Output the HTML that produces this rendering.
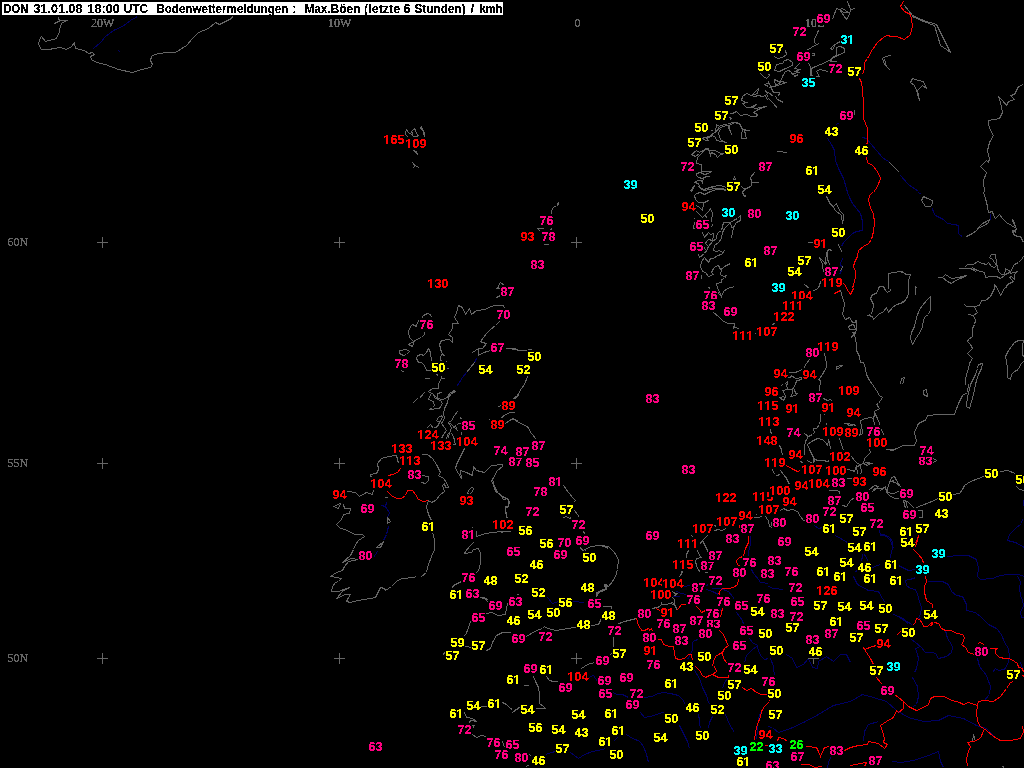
<!DOCTYPE html>
<html lang="de"><head><meta charset="utf-8"><title>Bodenwettermeldungen</title>
<style>html,body{margin:0;padding:0;background:#000;overflow:hidden}svg{display:block}.n{font:bold 12.6px "Liberation Sans",sans-serif}.l{font:12px "Liberation Serif",serif;fill:#666}.t{font:bold 12.6px "Liberation Sans",sans-serif;fill:#000}</style></head><body>
<svg width="1024" height="768" viewBox="0 0 1024 768">
<rect width="1024" height="768" fill="#000"/>
<defs><filter id="th" color-interpolation-filters="sRGB"><feComponentTransfer><feFuncA type="discrete" tableValues="0 0 1 1 1"/></feComponentTransfer></filter><filter id="tl" color-interpolation-filters="sRGB"><feComponentTransfer><feFuncA type="discrete" tableValues="0 1 1 1"/></feComponentTransfer></filter></defs>
<g fill="none" stroke="#666666" stroke-width="1" shape-rendering="crispEdges">
<polyline points="58.5,16.5 58.5,19.5 60.5,20.5 54.5,23.5 56.5,22.5 61.5,20.5 67.5,20.5 62.5,22.5 60.5,25.5 59.5,31.5 56.5,38.5 45.5,41.5 41.5,36.5 39.5,39.5 38.5,44.5 41.5,49.5 48.5,49.5 60.5,47.5 66.5,49.5 71.5,46.5 74.5,42.5 75.5,48.5 84.5,50.5 88.5,53.5 92.5,52.5 94.5,54.5 90.5,56.5 91.5,59.5 96.5,62.5 105.5,64.5 118.5,69.5 132.5,72.5 141.5,69.5 150.5,67.5 152.5,64.5 150.5,60.5 151.5,56.5 154.5,54.5 165.5,52.5 175.5,52.5 186.5,45.5 192.5,38.5 198.5,32.5 208.5,28.5 215.5,22.5 219.5,24.5 225.5,21.5 231.5,18.5 232.5,16.5"/>
<polyline points="406.5,129.5 405.5,132.5 405.5,134.5 407.5,136.5 408.5,137.5"/>
<polyline points="406.5,129.5 408.5,132.5 411.5,134.5 413.5,136.5 416.5,136.5 418.5,137.5"/>
<polyline points="411.5,131.5 414.5,128.5 415.5,130.5 416.5,133.5 418.5,135.5 416.5,136.5"/>
<polyline points="411.5,131.5 412.5,133.5 412.5,135.5"/>
<polyline points="421.5,126.5 420.5,128.5 422.5,129.5 423.5,132.5 424.5,136.5"/>
<polyline points="421.5,126.5 422.5,129.5 424.5,132.5 424.5,136.5"/>
<polyline points="413.5,150.5 416.5,151.5 417.5,154.5 415.5,152.5 413.5,150.5"/>
<polyline points="412.5,162.5 414.5,165.5 413.5,168.5"/>
<polyline points="412.5,162.5 415.5,165.5 418.5,167.5 417.5,168.5"/>
<polyline points="760.5,73.5 763.5,76.5 766.5,78.5 768.5,76.5"/>
<polyline points="764.5,84.5 767.5,83.5 768.5,83.5"/>
<polyline points="764.5,84.5 768.5,86.5"/>
<polyline points="765.5,90.5 766.5,92.5 768.5,93.5"/>
<polyline points="766.5,94.5 768.5,97.5"/>
<polyline points="751.5,95.5 754.5,92.5 758.5,88.5 757.5,93.5 754.5,94.5 751.5,95.5"/>
<polyline points="742.5,96.5 746.5,93.5 751.5,95.5 754.5,96.5 758.5,95.5 762.5,96.5 765.5,95.5 766.5,98.5 768.5,100.5"/>
<polyline points="742.5,96.5 741.5,100.5 746.5,102.5 742.5,103.5 746.5,107.5 750.5,107.5 754.5,105.5 756.5,104.5 752.5,107.5 755.5,108.5 760.5,107.5 766.5,106.5 760.5,108.5 756.5,110.5 753.5,112.5 757.5,114.5 756.5,116.5 751.5,116.5 746.5,114.5 740.5,115.5 736.5,111.5 732.5,113.5 729.5,113.5"/>
<polyline points="729.5,117.5 731.5,118.5 729.5,120.5"/>
<polyline points="716.5,124.5 719.5,126.5 715.5,132.5 716.5,124.5"/>
<polyline points="720.5,125.5 725.5,124.5 728.5,125.5"/>
<polyline points="710.5,130.5 712.5,130.5"/>
<polyline points="696.5,136.5 701.5,136.5"/>
<polyline points="704.5,137.5 709.5,136.5 714.5,132.5 719.5,128.5 722.5,126.5 728.5,125.5 729.5,128.5 731.5,134.5 728.5,127.5 730.5,124.5 735.5,122.5 739.5,123.5 741.5,126.5 742.5,129.5 749.5,130.5 744.5,130.5 745.5,134.5 746.5,138.5 741.5,138.5 741.5,134.5 742.5,129.5 740.5,125.5 738.5,123.5 733.5,122.5 728.5,123.5"/>
<polyline points="704.5,137.5 702.5,138.5 705.5,140.5 708.5,140.5 706.5,138.5 712.5,135.5 715.5,137.5 716.5,140.5 721.5,141.5 726.5,142.5 721.5,140.5 719.5,137.5 718.5,132.5 720.5,129.5"/>
<polyline points="691.5,154.5 696.5,150.5 699.5,152.5 704.5,149.5 708.5,148.5 709.5,151.5 710.5,155.5 711.5,152.5 715.5,154.5 717.5,157.5 720.5,154.5 724.5,153.5 720.5,153.5 715.5,150.5 709.5,150.5 705.5,148.5 701.5,153.5 697.5,157.5 696.5,163.5 701.5,164.5 701.5,171.5 705.5,171.5 711.5,171.5 708.5,173.5 704.5,174.5 700.5,172.5 696.5,173.5 696.5,175.5 698.5,177.5 702.5,178.5 706.5,176.5 709.5,176.5 703.5,177.5 702.5,182.5 701.5,180.5 697.5,180.5 694.5,182.5 698.5,183.5 699.5,186.5 701.5,189.5 704.5,190.5 706.5,188.5 712.5,186.5 720.5,185.5 726.5,187.5"/>
<polyline points="691.5,154.5 695.5,156.5 699.5,153.5"/>
<polyline points="694.5,185.5 692.5,189.5 691.5,192.5"/>
<polyline points="704.5,190.5 709.5,189.5 715.5,188.5 721.5,189.5 726.5,190.5"/>
<polyline points="734.5,176.5 733.5,179.5 735.5,179.5 734.5,176.5"/>
<polyline points="754.5,172.5 750.5,177.5 751.5,181.5 751.5,185.5 746.5,188.5 744.5,189.5 741.5,186.5 739.5,186.5"/>
<polyline points="751.5,182.5 758.5,182.5"/>
<polyline points="746.5,188.5 742.5,192.5"/>
<polyline points="904.5,5.5 912.5,15.5 923.5,20.5 936.5,24.5 950.5,52.5 946.5,49.5 940.5,45.5 934.5,25.5 923.5,21.5 912.5,16.5"/>
<polyline points="912.5,78.5 918.5,80.5 923.5,81.5 926.5,88.5 922.5,85.5 917.5,90.5 919.5,100.5 916.5,90.5 914.5,85.5 910.5,82.5 912.5,78.5"/>
<polyline points="1023.5,84.5 1018.5,86.5 1014.5,94.5 1010.5,95.5 1014.5,99.5 1008.5,101.5 1006.5,105.5 1002.5,100.5 998.5,96.5 1000.5,102.5 1002.5,112.5 999.5,118.5 988.5,120.5 988.5,124.5 990.5,130.5 993.5,135.5 989.5,142.5 987.5,150.5 989.5,158.5 988.5,162.5 986.5,160.5 980.5,166.5 986.5,172.5 983.5,180.5 984.5,192.5"/>
<polyline points="832.5,19.5 836.5,8.5 839.5,9.5 842.5,8.5 848.5,12.5 843.5,12.5 839.5,9.5 846.5,19.5 849.5,14.5 850.5,9.5 847.5,1.5"/>
<polyline points="850.5,9.5 855.5,8.5"/>
<polyline points="818.5,30.5 814.5,39.5 814.5,42.5 816.5,44.5 819.5,43.5"/>
<polyline points="816.5,44.5 806.5,50.5"/>
<polyline points="785.5,50.5 786.5,54.5 782.5,57.5 777.5,58.5 774.5,56.5"/>
<polyline points="811.5,53.5 814.5,53.5 814.5,55.5 811.5,55.5"/>
<polyline points="776.5,64.5 782.5,63.5 784.5,60.5 788.5,59.5 792.5,62.5 792.5,65.5 785.5,68.5 779.5,71.5 774.5,70.5 776.5,64.5"/>
<polyline points="799.5,63.5 794.5,68.5 799.5,69.5 795.5,71.5 799.5,72.5 793.5,73.5 794.5,76.5 798.5,74.5"/>
<polyline points="788.5,70.5 790.5,71.5 793.5,75.5"/>
<polyline points="788.5,70.5 785.5,71.5 782.5,76.5 780.5,81.5 786.5,82.5 777.5,85.5 773.5,86.5 770.5,86.5"/>
<polyline points="774.5,79.5 775.5,85.5 780.5,82.5 774.5,79.5"/>
<polyline points="768.5,74.5 770.5,75.5"/>
<polyline points="808.5,63.5 811.5,68.5 810.5,76.5 809.5,76.5"/>
<polyline points="811.5,68.5 815.5,66.5 820.5,64.5 827.5,61.5 833.5,57.5 839.5,54.5 844.5,52.5 844.5,49.5 843.5,47.5 839.5,46.5 836.5,47.5 836.5,55.5 832.5,57.5 830.5,61.5 836.5,61.5"/>
<polyline points="840.5,41.5 836.5,43.5 832.5,46.5 830.5,48.5 832.5,49.5 834.5,46.5"/>
<polyline points="810.5,68.5 811.5,74.5 812.5,76.5 819.5,76.5 816.5,71.5 819.5,69.5 828.5,71.5"/>
<polyline points="768.5,81.5 770.5,86.5 773.5,92.5 779.5,92.5 778.5,96.5"/>
<polyline points="770.5,86.5 768.5,88.5"/>
<polyline points="768.5,92.5 773.5,96.5"/>
<polyline points="891.5,55.5 885.5,56.5 882.5,58.5 884.5,64.5 889.5,69.5 886.5,66.5 884.5,59.5"/>
<polyline points="768.5,98.5 773.5,103.5 777.5,108.5"/>
<polyline points="775.5,96.5 777.5,99.5 783.5,102.5"/>
<polyline points="854.5,109.5 854.5,114.5"/>
<polyline points="777.5,151.5 787.5,152.5"/>
<polyline points="889.5,162.5 893.5,166.5 896.5,169.5 899.5,172.5"/>
<polyline points="504.5,285.5 500.5,282.5 498.5,285.5 498.5,287.5 496.5,288.5 499.5,288.5"/>
<polyline points="496.5,297.5 500.5,295.5"/>
<polyline points="458.5,305.5 462.5,307.5 465.5,314.5 469.5,308.5 471.5,314.5 476.5,310.5 485.5,309.5 490.5,306.5 496.5,305.5 503.5,305.5 504.5,308.5"/>
<polyline points="458.5,305.5 456.5,312.5 454.5,317.5 456.5,320.5 458.5,323.5 452.5,323.5 452.5,328.5 448.5,334.5 452.5,337.5 452.5,342.5 449.5,339.5 441.5,340.5 439.5,344.5 440.5,348.5 441.5,352.5 444.5,355.5 441.5,354.5 440.5,357.5 440.5,360.5 442.5,361.5"/>
<polyline points="446.5,361.5 447.5,362.5"/>
<polyline points="446.5,368.5 448.5,368.5"/>
<polyline points="499.5,321.5 495.5,325.5 490.5,329.5 486.5,333.5 483.5,337.5 480.5,341.5 482.5,342.5 486.5,343.5 482.5,348.5 478.5,348.5 478.5,355.5 483.5,352.5 487.5,351.5 490.5,350.5"/>
<polyline points="472.5,352.5 478.5,348.5"/>
<polyline points="505.5,348.5 514.5,348.5 518.5,350.5"/>
<polyline points="474.5,362.5 470.5,367.5 466.5,372.5"/>
<polyline points="431.5,317.5 430.5,314.5 427.5,313.5 423.5,315.5 421.5,318.5"/>
<polyline points="419.5,319.5 417.5,322.5 416.5,326.5 412.5,324.5 410.5,326.5 408.5,331.5 409.5,337.5 413.5,341.5 408.5,344.5 412.5,346.5 414.5,340.5 421.5,337.5 424.5,334.5 424.5,331.5"/>
<polyline points="399.5,350.5 406.5,349.5 409.5,351.5 406.5,354.5 403.5,355.5 399.5,353.5 399.5,350.5"/>
<polyline points="428.5,348.5 430.5,352.5 431.5,361.5 431.5,368.5"/>
<polyline points="428.5,348.5 426.5,352.5 423.5,355.5 421.5,354.5 417.5,355.5 416.5,358.5 418.5,362.5 421.5,362.5 424.5,365.5 426.5,370.5 431.5,370.5"/>
<polyline points="401.5,370.5 404.5,372.5"/>
<polyline points="512.5,349.5 523.5,350.5 532.5,349.5"/>
<polyline points="527.5,376.5 524.5,384.5"/>
<polyline points="558.5,202.5 556.5,205.5 553.5,207.5 551.5,210.5 551.5,214.5"/>
<polyline points="558.5,202.5 558.5,204.5 556.5,206.5"/>
<polyline points="538.5,218.5 538.5,218.5"/>
<polyline points="537.5,228.5 543.5,228.5"/>
<polyline points="537.5,228.5 540.5,231.5"/>
<polyline points="551.5,228.5 550.5,230.5"/>
<polyline points="544.5,243.5 544.5,244.5 548.5,244.5 548.5,243.5"/>
<polyline points="690.5,191.5 693.5,186.5"/>
<polyline points="698.5,186.5 703.5,189.5 710.5,187.5 715.5,186.5"/>
<polyline points="727.5,190.5 722.5,188.5 716.5,189.5 710.5,191.5 704.5,194.5 700.5,192.5 696.5,193.5 694.5,195.5 695.5,199.5 698.5,202.5 703.5,202.5 708.5,200.5 703.5,203.5 702.5,210.5 699.5,207.5 696.5,205.5"/>
<polyline points="696.5,211.5 699.5,214.5 702.5,217.5 705.5,214.5 708.5,211.5 710.5,208.5 712.5,213.5 711.5,221.5 710.5,222.5"/>
<polyline points="705.5,214.5 706.5,218.5"/>
<polyline points="694.5,217.5 694.5,218.5"/>
<polyline points="712.5,224.5 711.5,227.5"/>
<polyline points="694.5,222.5 693.5,228.5 695.5,228.5"/>
<polyline points="702.5,232.5 704.5,237.5 708.5,232.5 710.5,234.5 713.5,233.5 713.5,236.5 712.5,240.5 708.5,239.5 706.5,241.5 705.5,243.5 708.5,246.5 707.5,248.5 706.5,251.5 704.5,252.5"/>
<polyline points="704.5,247.5 705.5,250.5"/>
<polyline points="740.5,215.5 737.5,218.5 733.5,220.5 730.5,222.5 723.5,222.5 721.5,230.5 718.5,232.5 716.5,235.5 716.5,238.5 712.5,241.5 708.5,246.5"/>
<polyline points="730.5,222.5 724.5,228.5 722.5,232.5 721.5,238.5 718.5,242.5 714.5,245.5 713.5,250.5 716.5,251.5 719.5,250.5 722.5,252.5 724.5,250.5 721.5,254.5 717.5,255.5 713.5,258.5 710.5,258.5 708.5,262.5 704.5,257.5 701.5,261.5 700.5,266.5 702.5,271.5 705.5,272.5 708.5,276.5 713.5,274.5 711.5,272.5 713.5,268.5 715.5,266.5 718.5,265.5 720.5,269.5 726.5,265.5 730.5,263.5 724.5,266.5 721.5,269.5 720.5,274.5 723.5,276.5 726.5,275.5 724.5,278.5 721.5,279.5 721.5,282.5"/>
<polyline points="740.5,215.5 740.5,220.5 736.5,222.5 733.5,227.5 732.5,232.5 731.5,238.5"/>
<polyline points="730.5,222.5 731.5,227.5 733.5,227.5"/>
<polyline points="698.5,254.5 699.5,257.5 703.5,254.5 701.5,254.5"/>
<polyline points="701.5,274.5 701.5,278.5"/>
<polyline points="742.5,188.5 746.5,188.5 751.5,186.5"/>
<polyline points="743.5,190.5 742.5,192.5 744.5,196.5 746.5,195.5"/>
<polyline points="722.5,282.5 716.5,283.5 717.5,288.5 719.5,291.5 721.5,296.5 723.5,291.5 727.5,288.5 734.5,286.5"/>
<polyline points="719.5,291.5 718.5,293.5 721.5,296.5"/>
<polyline points="708.5,287.5 710.5,288.5"/>
<polyline points="713.5,312.5 718.5,316.5 723.5,321.5 728.5,323.5 734.5,323.5 733.5,328.5 734.5,326.5 737.5,328.5 740.5,329.5"/>
<polyline points="754.5,333.5 756.5,333.5"/>
<polyline points="772.5,324.5 775.5,323.5"/>
<polyline points="788.5,372.5 794.5,372.5 800.5,370.5"/>
<polyline points="788.5,378.5 791.5,375.5 795.5,378.5"/>
<polyline points="774.5,323.5 772.5,324.5"/>
<polyline points="923.5,196.5 927.5,198.5 932.5,200.5 932.5,203.5 930.5,206.5 925.5,206.5 923.5,203.5 921.5,200.5 923.5,196.5"/>
<polyline points="983.5,192.5 985.5,198.5 987.5,206.5 988.5,212.5 992.5,211.5 993.5,215.5 995.5,218.5 999.5,214.5 1002.5,218.5 1006.5,222.5 1011.5,225.5 1016.5,228.5 1015.5,230.5 1012.5,230.5 1013.5,234.5 1017.5,236.5 1020.5,236.5 1022.5,240.5 1023.5,242.5"/>
<polyline points="1012.5,218.5 1012.5,221.5 1014.5,224.5 1015.5,226.5 1014.5,223.5 1013.5,220.5"/>
<polyline points="1012.5,230.5 1016.5,232.5"/>
<polyline points="989.5,219.5 986.5,221.5 982.5,223.5 979.5,226.5 976.5,230.5 972.5,233.5 968.5,235.5 966.5,236.5"/>
<polyline points="989.5,219.5 988.5,222.5 984.5,225.5 979.5,227.5"/>
<polyline points="1023.5,256.5 1021.5,259.5 1018.5,262.5 1014.5,264.5 1012.5,267.5 1011.5,271.5 1007.5,273.5 1005.5,274.5 1001.5,274.5 998.5,271.5 996.5,263.5 995.5,254.5 991.5,254.5 989.5,257.5 992.5,259.5 996.5,265.5"/>
<polyline points="958.5,268.5 964.5,268.5"/>
<polyline points="958.5,268.5 964.5,268.5"/>
<polyline points="964.5,267.5 967.5,264.5 973.5,264.5 977.5,261.5 982.5,263.5 986.5,264.5 988.5,262.5 991.5,266.5 994.5,267.5 996.5,265.5"/>
<polyline points="964.5,268.5 970.5,268.5 974.5,270.5 973.5,268.5 977.5,270.5 984.5,272.5 985.5,277.5 991.5,276.5 996.5,276.5 1000.5,278.5 1004.5,275.5 1005.5,268.5 1008.5,270.5 1010.5,271.5 1010.5,273.5 1017.5,271.5 1014.5,274.5 1014.5,279.5 1011.5,276.5 1009.5,277.5 1013.5,281.5 1007.5,284.5 1005.5,288.5"/>
<polyline points="937.5,277.5 942.5,277.5 945.5,274.5 951.5,278.5 958.5,277.5 966.5,275.5 960.5,278.5 955.5,280.5 951.5,283.5 947.5,281.5 942.5,277.5"/>
<polyline points="896.5,271.5 902.5,271.5 905.5,274.5 910.5,274.5 908.5,280.5 908.5,284.5 908.5,288.5"/>
<polyline points="915.5,288.5 915.5,286.5 917.5,288.5"/>
<polyline points="994.5,288.5 994.5,284.5 997.5,288.5"/>
<polyline points="896.5,304.5 900.5,303.5 904.5,300.5 907.5,297.5 908.5,292.5 908.5,288.5"/>
<polyline points="915.5,288.5 915.5,294.5"/>
<polyline points="930.5,296.5 930.5,302.5 930.5,309.5 928.5,314.5 925.5,316.5 923.5,319.5 922.5,326.5 920.5,331.5 916.5,337.5 912.5,344.5 910.5,338.5 911.5,332.5 914.5,326.5 916.5,317.5 919.5,309.5 922.5,305.5 926.5,300.5 930.5,296.5"/>
<polyline points="994.5,288.5 992.5,292.5 990.5,296.5 985.5,300.5 981.5,300.5 979.5,305.5 974.5,306.5 966.5,306.5 964.5,304.5"/>
<polyline points="974.5,306.5 975.5,309.5 977.5,312.5 973.5,315.5 968.5,314.5"/>
<polyline points="973.5,315.5 975.5,320.5 974.5,324.5 972.5,328.5 972.5,336.5 968.5,339.5 967.5,341.5 970.5,344.5 972.5,348.5 967.5,353.5 972.5,358.5 969.5,363.5 968.5,368.5 966.5,374.5 965.5,379.5 965.5,384.5"/>
<polyline points="997.5,288.5 1000.5,295.5 1004.5,288.5"/>
<polyline points="982.5,363.5 978.5,364.5 977.5,368.5 975.5,374.5 972.5,380.5 970.5,384.5"/>
<polyline points="982.5,363.5 981.5,368.5 978.5,374.5 976.5,380.5 975.5,384.5"/>
<polyline points="1023.5,340.5 1018.5,340.5 1014.5,342.5 1011.5,346.5 1008.5,350.5 1005.5,356.5 1006.5,360.5 1007.5,368.5 1007.5,377.5 1010.5,379.5 1011.5,374.5 1014.5,371.5 1018.5,369.5 1020.5,364.5 1024.5,360.5"/>
<polyline points="1023.5,340.5 1022.5,346.5 1022.5,353.5 1023.5,357.5"/>
<polyline points="900.5,384.5 901.5,378.5 904.5,377.5 902.5,384.5"/>
<polyline points="826.5,196.5 830.5,204.5 833.5,206.5 836.5,203.5 839.5,210.5 843.5,214.5 843.5,218.5 842.5,223.5 841.5,215.5 835.5,210.5 831.5,204.5"/>
<polyline points="808.5,242.5 812.5,242.5"/>
<polyline points="838.5,244.5 840.5,249.5 842.5,252.5"/>
<polyline points="832.5,250.5 828.5,249.5 827.5,252.5 827.5,258.5 828.5,262.5 830.5,265.5"/>
<polyline points="828.5,249.5 826.5,253.5 825.5,260.5 826.5,264.5"/>
<polyline points="819.5,257.5 823.5,261.5 826.5,265.5"/>
<polyline points="819.5,257.5 822.5,264.5 823.5,272.5"/>
<polyline points="842.5,266.5 840.5,271.5"/>
<polyline points="804.5,284.5 809.5,288.5"/>
<polyline points="821.5,280.5 819.5,284.5 818.5,288.5"/>
<polyline points="888.5,288.5 888.5,273.5 894.5,272.5 899.5,271.5 903.5,272.5 906.5,274.5 910.5,274.5 908.5,280.5 908.5,288.5"/>
<polyline points="878.5,288.5 879.5,286.5 883.5,286.5 884.5,288.5"/>
<polyline points="840.5,290.5 842.5,297.5 844.5,303.5 843.5,310.5 842.5,313.5 843.5,316.5 845.5,319.5 849.5,317.5 851.5,320.5 852.5,322.5 855.5,322.5 855.5,320.5 856.5,320.5 856.5,329.5 855.5,332.5 854.5,334.5 852.5,332.5 854.5,332.5 851.5,337.5 854.5,334.5 855.5,339.5 856.5,344.5 856.5,350.5 859.5,356.5 860.5,362.5 863.5,362.5 865.5,368.5 866.5,374.5 869.5,380.5 872.5,384.5"/>
<polyline points="848.5,326.5 852.5,324.5 854.5,325.5 855.5,329.5 849.5,329.5 848.5,326.5"/>
<polyline points="813.5,290.5 818.5,288.5"/>
<polyline points="809.5,359.5 806.5,363.5 803.5,368.5 800.5,370.5 795.5,372.5 788.5,372.5"/>
<polyline points="824.5,353.5 825.5,358.5 826.5,363.5 826.5,367.5 824.5,370.5 822.5,374.5 819.5,378.5 818.5,379.5 820.5,380.5 820.5,384.5"/>
<polyline points="836.5,366.5 842.5,365.5 836.5,369.5 836.5,366.5"/>
<polyline points="784.5,384.5 787.5,381.5 787.5,384.5"/>
<polyline points="788.5,377.5 792.5,376.5 795.5,378.5 802.5,377.5"/>
<polyline points="795.5,384.5 796.5,380.5 798.5,380.5 802.5,378.5"/>
<polyline points="878.5,288.5 876.5,293.5 872.5,294.5 870.5,298.5 873.5,304.5 872.5,311.5 870.5,314.5 868.5,315.5 872.5,316.5 873.5,319.5 878.5,314.5 883.5,311.5 886.5,307.5 888.5,312.5 892.5,307.5 896.5,304.5 903.5,302.5 906.5,298.5 908.5,293.5 908.5,288.5"/>
<polyline points="884.5,288.5 885.5,290.5 887.5,292.5 890.5,290.5 890.5,288.5"/>
<polyline points="370.5,474.5 376.5,473.5 378.5,469.5 377.5,463.5 381.5,458.5 388.5,456.5 396.5,455.5 397.5,459.5 398.5,463.5"/>
<polyline points="421.5,454.5 427.5,454.5 432.5,458.5 436.5,464.5 440.5,472.5 438.5,475.5 443.5,478.5 446.5,482.5 448.5,487.5 445.5,487.5 444.5,483.5 442.5,485.5 444.5,491.5 440.5,494.5 435.5,500.5 431.5,502.5 428.5,500.5"/>
<polyline points="421.5,475.5 428.5,476.5 428.5,480.5 425.5,483.5 421.5,482.5"/>
<polyline points="347.5,491.5 355.5,492.5 359.5,496.5 366.5,492.5 372.5,494.5 373.5,490.5"/>
<polyline points="370.5,474.5 371.5,478.5"/>
<polyline points="343.5,504.5 344.5,508.5 350.5,508.5 349.5,513.5 343.5,514.5 341.5,519.5 336.5,524.5 340.5,528.5 345.5,529.5 350.5,532.5 355.5,534.5 362.5,534.5 364.5,536.5 358.5,540.5 355.5,544.5 353.5,549.5 350.5,555.5 342.5,562.5 351.5,558.5 358.5,559.5 348.5,561.5 344.5,566.5 342.5,570.5 336.5,572.5 330.5,576.5"/>
<polyline points="428.5,500.5 426.5,506.5 428.5,514.5 431.5,520.5 432.5,524.5"/>
<polyline points="432.5,532.5 434.5,539.5 434.5,549.5 431.5,556.5 428.5,564.5 426.5,572.5 421.5,576.5"/>
<polyline points="464.5,448.5 460.5,456.5 456.5,464.5 455.5,468.5 458.5,473.5 461.5,478.5 460.5,470.5 466.5,472.5 472.5,475.5 473.5,466.5 476.5,470.5 484.5,472.5 491.5,465.5 502.5,464.5 502.5,466.5 497.5,470.5 492.5,479.5 494.5,486.5 497.5,492.5 502.5,496.5 508.5,499.5 508.5,506.5 505.5,506.5 506.5,516.5 507.5,520.5"/>
<polyline points="387.5,517.5 390.5,521.5 387.5,523.5 387.5,517.5"/>
<polyline points="383.5,541.5 380.5,547.5 376.5,547.5 383.5,541.5"/>
<polyline points="384.5,497.5 387.5,497.5"/>
<polyline points="333.5,506.5 340.5,503.5 338.5,508.5 333.5,506.5"/>
<polyline points="436.5,374.5 438.5,375.5"/>
<polyline points="441.5,375.5 441.5,378.5 444.5,378.5"/>
<polyline points="424.5,378.5 429.5,378.5"/>
<polyline points="441.5,378.5 438.5,383.5 438.5,388.5 432.5,388.5 428.5,391.5 431.5,393.5 429.5,396.5 428.5,399.5 433.5,401.5 434.5,405.5 432.5,407.5 429.5,409.5 439.5,408.5 442.5,403.5 440.5,400.5 435.5,398.5 432.5,393.5 437.5,398.5 442.5,399.5 447.5,397.5 449.5,393.5 454.5,390.5 455.5,391.5 451.5,393.5 448.5,397.5 447.5,402.5 444.5,408.5 443.5,413.5 444.5,418.5 441.5,423.5 444.5,427.5 446.5,430.5 443.5,434.5 441.5,438.5"/>
<polyline points="437.5,393.5 441.5,392.5 437.5,393.5 437.5,397.5"/>
<polyline points="424.5,392.5 419.5,398.5"/>
<polyline points="417.5,398.5 412.5,403.5"/>
<polyline points="441.5,415.5 438.5,417.5 436.5,420.5 439.5,422.5 437.5,426.5 433.5,428.5 430.5,424.5 426.5,428.5"/>
<polyline points="441.5,415.5 442.5,417.5 439.5,422.5"/>
<polyline points="457.5,411.5 454.5,415.5 451.5,420.5 448.5,422.5 449.5,424.5 451.5,427.5 450.5,431.5 447.5,434.5 446.5,439.5"/>
<polyline points="448.5,422.5 451.5,424.5 455.5,428.5 458.5,431.5"/>
<polyline points="449.5,432.5 448.5,438.5"/>
<polyline points="451.5,433.5 453.5,436.5 454.5,440.5 455.5,444.5 452.5,444.5"/>
<polyline points="460.5,417.5 461.5,419.5 461.5,434.5"/>
<polyline points="460.5,423.5 458.5,423.5 456.5,425.5 453.5,427.5 456.5,428.5 455.5,425.5"/>
<polyline points="513.5,399.5 517.5,396.5 518.5,394.5"/>
<polyline points="498.5,406.5 501.5,405.5"/>
<polyline points="500.5,418.5 505.5,414.5 510.5,412.5 514.5,412.5"/>
<polyline points="505.5,423.5 509.5,420.5 513.5,418.5 516.5,420.5 518.5,421.5"/>
<polyline points="489.5,419.5 490.5,420.5"/>
<polyline points="524.5,384.5 521.5,388.5 517.5,395.5 512.5,399.5"/>
<polyline points="512.5,412.5 514.5,412.5"/>
<polyline points="512.5,418.5 520.5,423.5 527.5,426.5 531.5,433.5 536.5,439.5"/>
<polyline points="579.5,546.5 583.5,550.5 590.5,546.5 600.5,545.5 608.5,546.5 614.5,552.5 618.5,559.5 617.5,569.5 615.5,576.5"/>
<polyline points="691.5,535.5 693.5,537.5"/>
<polyline points="707.5,535.5 702.5,540.5 699.5,544.5"/>
<polyline points="702.5,540.5 705.5,546.5 708.5,552.5"/>
<polyline points="688.5,550.5 686.5,554.5 686.5,558.5"/>
<polyline points="697.5,550.5 699.5,555.5 701.5,557.5 696.5,558.5 695.5,561.5 696.5,565.5 697.5,568.5 699.5,570.5"/>
<polyline points="714.5,525.5 716.5,526.5"/>
<polyline points="714.5,530.5 718.5,529.5 721.5,530.5 726.5,528.5"/>
<polyline points="753.5,517.5 757.5,517.5 762.5,516.5"/>
<polyline points="756.5,513.5 756.5,514.5"/>
<polyline points="765.5,516.5 767.5,519.5 768.5,520.5"/>
<polyline points="681.5,571.5 680.5,572.5"/>
<polyline points="491.5,480.5 493.5,485.5 495.5,491.5 500.5,494.5 503.5,499.5 507.5,498.5 509.5,501.5 508.5,506.5 505.5,508.5 505.5,512.5 507.5,518.5"/>
<polyline points="510.5,531.5 505.5,531.5 501.5,531.5 502.5,533.5"/>
<polyline points="501.5,531.5 492.5,532.5 485.5,533.5 479.5,535.5 476.5,536.5 476.5,530.5"/>
<polyline points="471.5,527.5 472.5,527.5"/>
<polyline points="474.5,488.5 471.5,487.5 468.5,490.5 467.5,493.5 469.5,494.5 471.5,492.5 473.5,489.5"/>
<polyline points="473.5,542.5 469.5,546.5 465.5,551.5 464.5,553.5 471.5,552.5 473.5,549.5 478.5,548.5 480.5,553.5 480.5,561.5 479.5,568.5 477.5,571.5 475.5,573.5"/>
<polyline points="451.5,588.5 454.5,584.5 460.5,582.5"/>
<polyline points="482.5,597.5 486.5,598.5 487.5,600.5"/>
<polyline points="563.5,485.5 568.5,492.5 573.5,498.5 575.5,500.5 573.5,502.5"/>
<polyline points="574.5,510.5 577.5,514.5 579.5,517.5"/>
<polyline points="563.5,517.5 566.5,516.5 569.5,518.5 571.5,517.5"/>
<polyline points="582.5,527.5 583.5,530.5 584.5,534.5"/>
<polyline points="579.5,546.5 581.5,549.5 584.5,551.5 586.5,548.5 591.5,546.5 598.5,545.5 604.5,546.5 608.5,548.5"/>
<polyline points="608.5,585.5 604.5,584.5 606.5,588.5 603.5,589.5 596.5,592.5 596.5,597.5"/>
<polyline points="516.5,595.5 519.5,593.5"/>
<polyline points="884.5,448.5 892.5,450.5 903.5,445.5 914.5,445.5 916.5,440.5 914.5,432.5 918.5,423.5 926.5,419.5 927.5,415.5 938.5,414.5 943.5,414.5 954.5,414.5 958.5,403.5 962.5,395.5 967.5,392.5 968.5,384.5"/>
<polyline points="975.5,384.5 973.5,394.5 969.5,408.5 966.5,406.5 967.5,396.5 969.5,389.5 970.5,384.5"/>
<polyline points="923.5,390.5 926.5,389.5 927.5,396.5 923.5,394.5 923.5,390.5"/>
<polyline points="785.5,476.5 787.5,480.5 789.5,484.5"/>
<polyline points="846.5,478.5 851.5,478.5"/>
<polyline points="828.5,490.5 836.5,490.5 839.5,491.5 839.5,494.5"/>
<polyline points="854.5,497.5 850.5,500.5 846.5,506.5 842.5,505.5"/>
<polyline points="780.5,510.5 783.5,508.5 787.5,510.5 792.5,509.5 797.5,511.5 800.5,516.5 803.5,520.5 805.5,520.5"/>
<polyline points="768.5,520.5 769.5,526.5 772.5,527.5"/>
<polyline points="771.5,521.5 771.5,525.5"/>
<polyline points="869.5,489.5 874.5,485.5 878.5,486.5 876.5,488.5 872.5,491.5 874.5,488.5 880.5,488.5 885.5,487.5 887.5,492.5"/>
<polyline points="933.5,458.5 936.5,460.5 933.5,462.5"/>
<polyline points="891.5,477.5 894.5,476.5 896.5,480.5 900.5,486.5 895.5,482.5 891.5,481.5 894.5,479.5"/>
<polyline points="891.5,477.5 888.5,485.5 886.5,492.5 890.5,496.5 895.5,498.5 900.5,498.5"/>
<polyline points="880.5,490.5 885.5,486.5 886.5,492.5 893.5,493.5 900.5,490.5"/>
<polyline points="903.5,500.5 907.5,501.5 910.5,504.5 914.5,508.5 921.5,505.5 929.5,502.5 938.5,498.5"/>
<polyline points="903.5,500.5 905.5,508.5"/>
<polyline points="906.5,502.5 907.5,508.5"/>
<polyline points="917.5,510.5 922.5,510.5 922.5,517.5 918.5,517.5"/>
<polyline points="953.5,494.5 959.5,493.5 962.5,489.5 964.5,485.5 970.5,481.5 978.5,478.5 985.5,475.5"/>
<polyline points="1000.5,471.5 1007.5,470.5 1015.5,473.5"/>
<polyline points="1016.5,486.5 1019.5,489.5 1024.5,490.5"/>
<polyline points="780.5,386.5 782.5,384.5"/>
<polyline points="786.5,384.5 787.5,389.5 792.5,389.5 795.5,384.5"/>
<polyline points="787.5,389.5 782.5,390.5 784.5,393.5 785.5,396.5 783.5,400.5 779.5,397.5 784.5,396.5"/>
<polyline points="792.5,389.5 792.5,393.5 790.5,396.5 795.5,395.5 797.5,393.5 795.5,393.5 794.5,389.5"/>
<polyline points="819.5,384.5 819.5,391.5"/>
<polyline points="823.5,398.5 827.5,400.5 830.5,399.5 832.5,401.5"/>
<polyline points="820.5,413.5 823.5,413.5 825.5,415.5"/>
<polyline points="820.5,413.5 820.5,420.5 819.5,424.5 816.5,428.5 813.5,428.5 814.5,432.5 812.5,434.5 808.5,436.5 804.5,433.5 806.5,435.5 808.5,436.5 805.5,441.5 804.5,446.5 804.5,454.5"/>
<polyline points="826.5,422.5 826.5,425.5"/>
<polyline points="844.5,423.5 854.5,424.5 855.5,426.5 849.5,425.5 847.5,424.5"/>
<polyline points="807.5,444.5 811.5,441.5 817.5,438.5 822.5,439.5 825.5,442.5 827.5,445.5 828.5,440.5 829.5,442.5 830.5,449.5"/>
<polyline points="807.5,444.5 809.5,449.5 812.5,455.5 814.5,459.5 818.5,460.5 823.5,460.5 827.5,461.5 829.5,460.5"/>
<polyline points="814.5,459.5 813.5,463.5"/>
<polyline points="807.5,460.5 812.5,463.5"/>
<polyline points="839.5,438.5 841.5,444.5 843.5,450.5"/>
<polyline points="860.5,420.5 865.5,418.5 870.5,417.5 873.5,418.5 874.5,425.5"/>
<polyline points="860.5,420.5 861.5,426.5 860.5,432.5 859.5,435.5 862.5,433.5 862.5,430.5 861.5,427.5"/>
<polyline points="873.5,418.5 874.5,414.5 874.5,412.5"/>
<polyline points="874.5,412.5 877.5,418.5 879.5,423.5 881.5,430.5 884.5,435.5"/>
<polyline points="872.5,384.5 876.5,390.5 879.5,395.5 882.5,397.5 878.5,403.5 876.5,404.5 879.5,408.5 874.5,411.5 874.5,413.5"/>
<polyline points="866.5,442.5 867.5,442.5"/>
<polyline points="869.5,448.5 870.5,452.5 867.5,455.5 864.5,458.5 863.5,463.5 867.5,465.5 870.5,463.5 868.5,462.5 866.5,464.5"/>
<polyline points="851.5,456.5 854.5,460.5 857.5,463.5 860.5,464.5"/>
<polyline points="856.5,466.5 860.5,465.5 861.5,472.5 859.5,474.5"/>
<polyline points="847.5,469.5 852.5,470.5 854.5,471.5 856.5,465.5 857.5,474.5"/>
<polyline points="860.5,464.5 866.5,462.5 868.5,463.5 872.5,463.5"/>
<polyline points="799.5,460.5 802.5,462.5 800.5,462.5"/>
<polyline points="772.5,469.5 774.5,474.5"/>
<polyline points="776.5,475.5 780.5,474.5"/>
<polyline points="780.5,470.5 783.5,474.5 787.5,480.5"/>
<polyline points="770.5,428.5 770.5,432.5 772.5,433.5"/>
<polyline points="779.5,445.5 781.5,449.5 782.5,455.5"/>
<polyline points="884.5,448.5 889.5,449.5 893.5,449.5 896.5,448.5"/>
<polyline points="330.5,576.5 336.5,577.5 341.5,578.5 338.5,581.5 335.5,582.5 332.5,586.5 331.5,591.5 338.5,591.5 349.5,587.5 342.5,591.5 336.5,598.5 345.5,594.5 350.5,594.5 348.5,597.5 346.5,601.5 350.5,602.5 357.5,600.5 364.5,599.5 370.5,598.5 375.5,597.5 378.5,591.5 380.5,587.5 384.5,588.5 385.5,590.5 391.5,586.5 396.5,581.5 401.5,578.5 414.5,577.5 415.5,576.5"/>
<polyline points="451.5,588.5 454.5,585.5 458.5,582.5 462.5,581.5"/>
<polyline points="478.5,597.5 484.5,598.5 488.5,602.5"/>
<polyline points="486.5,613.5 491.5,612.5 498.5,615.5 505.5,614.5 506.5,607.5 508.5,601.5"/>
<polyline points="470.5,621.5 468.5,627.5 465.5,635.5 461.5,637.5"/>
<polyline points="465.5,646.5 471.5,647.5"/>
<polyline points="486.5,650.5 490.5,648.5 492.5,642.5 496.5,635.5 502.5,632.5 512.5,632.5"/>
<polyline points="442.5,655.5 444.5,652.5 446.5,656.5"/>
<polyline points="480.5,706.5 487.5,706.5"/>
<polyline points="502.5,702.5 506.5,704.5 510.5,708.5 512.5,709.5"/>
<polyline points="464.5,712.5 466.5,717.5 472.5,718.5 476.5,721.5 470.5,720.5 468.5,724.5 474.5,725.5 472.5,728.5"/>
<polyline points="472.5,734.5 476.5,737.5 481.5,735.5 486.5,736.5"/>
<polyline points="502.5,741.5 504.5,747.5"/>
<polyline points="512.5,596.5 518.5,594.5"/>
<polyline points="512.5,712.5 517.5,708.5 521.5,706.5"/>
<polyline points="526.5,636.5 534.5,631.5 542.5,628.5 544.5,626.5 547.5,628.5 556.5,630.5 574.5,627.5 577.5,627.5"/>
<polyline points="591.5,625.5 598.5,624.5 601.5,618.5 602.5,614.5 611.5,608.5 611.5,606.5 602.5,606.5"/>
<polyline points="596.5,596.5 598.5,592.5 606.5,589.5 604.5,585.5 608.5,586.5 612.5,581.5 615.5,576.5"/>
<polyline points="616.5,624.5 624.5,621.5 636.5,618.5 647.5,610.5 656.5,607.5 660.5,606.5"/>
<polyline points="613.5,636.5 613.5,647.5"/>
<polyline points="610.5,654.5 613.5,652.5"/>
<polyline points="581.5,668.5 587.5,664.5 594.5,662.5"/>
<polyline points="533.5,676.5 535.5,681.5 538.5,687.5 539.5,694.5 539.5,703.5 543.5,706.5 545.5,708.5 540.5,708.5 535.5,708.5"/>
<polyline points="523.5,685.5 528.5,685.5"/>
<polyline points="546.5,676.5 549.5,680.5 553.5,681.5 558.5,681.5"/>
<polyline points="512.5,711.5 514.5,711.5 520.5,706.5"/>
<polyline points="529.5,754.5 531.5,756.5"/>
<polyline points="526.5,766.5 529.5,764.5"/>
<polyline points="682.5,571.5 680.5,575.5 678.5,577.5"/>
<polyline points="698.5,570.5 700.5,571.5"/>
<polyline points="704.5,572.5 707.5,572.5"/>
<polyline points="672.5,591.5 676.5,594.5 673.5,596.5 678.5,592.5"/>
<polyline points="672.5,597.5 674.5,599.5 674.5,603.5 671.5,602.5"/>
<polyline points="661.5,601.5 661.5,604.5 666.5,604.5 669.5,603.5 674.5,604.5 676.5,608.5 676.5,609.5"/>
<polyline points="652.5,608.5 656.5,607.5 661.5,605.5"/>
<polyline points="972.5,741.5 973.5,734.5 975.5,741.5"/>
<polyline points="1002.5,766.5 1004.5,767.5"/>
</g>
<g fill="none" stroke="#000064" stroke-width="1" shape-rendering="crispEdges">
<polyline points="137.5,16.5 130.5,20.5 122.5,26.5 113.5,30.5 105.5,36.5 100.5,42.5 93.5,48.5"/>
<polyline points="118.5,50.5 120.5,52.5"/>
<polyline points="900.5,175.5 908.5,184.5 918.5,191.5"/>
<polyline points="839.5,122.5 836.5,124.5"/>
<polyline points="827.5,138.5 831.5,144.5 834.5,150.5 835.5,160.5 838.5,168.5 843.5,178.5 846.5,188.5 847.5,192.5"/>
<polyline points="862.5,137.5 866.5,138.5 870.5,143.5 876.5,150.5 882.5,157.5 886.5,160.5 889.5,161.5"/>
<polyline points="476.5,358.5 474.5,362.5"/>
<polyline points="918.5,192.5 921.5,194.5"/>
<polyline points="932.5,208.5 933.5,212.5 935.5,215.5 939.5,217.5 943.5,219.5 947.5,223.5 954.5,224.5 958.5,225.5 958.5,233.5 960.5,235.5 962.5,236.5"/>
<polyline points="990.5,213.5 990.5,219.5"/>
<polyline points="847.5,192.5 849.5,197.5 852.5,203.5 856.5,208.5 860.5,213.5 862.5,221.5 862.5,230.5 856.5,231.5 852.5,233.5 848.5,237.5 843.5,242.5 841.5,246.5"/>
<polyline points="842.5,258.5 840.5,263.5 841.5,267.5"/>
<polyline points="841.5,270.5 839.5,274.5"/>
<polyline points="381.5,505.5 385.5,506.5 386.5,502.5 385.5,506.5 386.5,508.5 389.5,512.5 387.5,517.5"/>
<polyline points="388.5,526.5 386.5,534.5 383.5,540.5"/>
<polyline points="377.5,551.5 373.5,557.5"/>
<polyline points="466.5,372.5 462.5,377.5 459.5,382.5 456.5,386.5"/>
<polyline points="750.5,535.5 750.5,544.5 748.5,551.5 748.5,556.5"/>
<polyline points="751.5,569.5 753.5,572.5"/>
<polyline points="947.5,556.5 958.5,555.5 968.5,555.5 976.5,559.5 978.5,568.5 977.5,576.5"/>
<polyline points="898.5,565.5 908.5,570.5 916.5,569.5"/>
<polyline points="996.5,576.5 1006.5,574.5 1018.5,574.5 1024.5,576.5"/>
<polyline points="814.5,525.5 818.5,528.5 822.5,527.5"/>
<polyline points="835.5,535.5 840.5,538.5 847.5,542.5"/>
<polyline points="879.5,530.5 880.5,535.5 884.5,534.5 889.5,537.5 892.5,541.5 892.5,548.5 890.5,555.5 890.5,558.5"/>
<polyline points="861.5,550.5 862.5,556.5 860.5,564.5 856.5,570.5 855.5,572.5"/>
<polyline points="864.5,554.5 868.5,561.5"/>
<polyline points="872.5,567.5 877.5,565.5 880.5,564.5"/>
<polyline points="880.5,534.5 886.5,536.5 890.5,540.5 893.5,548.5"/>
<polyline points="1023.5,499.5 1023.5,505.5"/>
<polyline points="1022.5,519.5 1021.5,523.5 1015.5,528.5 1009.5,534.5 1007.5,540.5 1015.5,542.5 1024.5,547.5"/>
<polyline points="547.5,597.5 552.5,603.5 558.5,601.5"/>
<polyline points="573.5,601.5 584.5,602.5"/>
<polyline points="588.5,677.5 593.5,675.5 597.5,681.5"/>
<polyline points="613.5,692.5 616.5,694.5 622.5,694.5 628.5,697.5"/>
<polyline points="545.5,754.5 551.5,752.5 555.5,751.5"/>
<polyline points="570.5,752.5 574.5,755.5 578.5,758.5 584.5,754.5 592.5,751.5 598.5,750.5 605.5,748.5"/>
<polyline points="617.5,737.5 613.5,741.5"/>
<polyline points="626.5,734.5 632.5,738.5 640.5,741.5"/>
<polyline points="684.5,586.5 690.5,585.5"/>
<polyline points="676.5,591.5 681.5,593.5 686.5,594.5"/>
<polyline points="672.5,596.5 679.5,596.5"/>
<polyline points="706.5,585.5 708.5,584.5"/>
<polyline points="706.5,589.5 712.5,591.5 718.5,594.5"/>
<polyline points="711.5,588.5 720.5,588.5 728.5,591.5 732.5,596.5 734.5,599.5"/>
<polyline points="751.5,570.5 754.5,574.5 758.5,579.5 760.5,582.5 768.5,583.5"/>
<polyline points="720.5,608.5 720.5,610.5"/>
<polyline points="736.5,612.5 739.5,616.5 742.5,620.5 743.5,624.5"/>
<polyline points="749.5,638.5 752.5,642.5 757.5,645.5 751.5,650.5 746.5,655.5 744.5,662.5"/>
<polyline points="757.5,645.5 758.5,651.5 761.5,656.5 764.5,659.5 768.5,658.5"/>
<polyline points="698.5,639.5 694.5,640.5 692.5,642.5 692.5,649.5 690.5,654.5 687.5,659.5"/>
<polyline points="694.5,670.5 699.5,678.5 702.5,687.5 706.5,695.5 708.5,702.5 710.5,704.5"/>
<polyline points="727.5,678.5 724.5,682.5 722.5,688.5"/>
<polyline points="644.5,697.5 651.5,696.5 658.5,693.5 663.5,692.5 670.5,693.5 678.5,695.5 682.5,699.5 685.5,704.5"/>
<polyline points="640.5,712.5 644.5,717.5 650.5,716.5 656.5,714.5 662.5,712.5 667.5,712.5"/>
<polyline points="698.5,714.5 699.5,720.5 699.5,725.5 701.5,728.5"/>
<polyline points="712.5,716.5 709.5,722.5 708.5,727.5 709.5,728.5"/>
<polyline points="725.5,714.5 729.5,724.5 734.5,732.5"/>
<polyline points="679.5,725.5 683.5,733.5 687.5,741.5 689.5,748.5"/>
<polyline points="640.5,742.5 643.5,746.5 646.5,754.5 648.5,762.5"/>
<polyline points="761.5,710.5 758.5,718.5 757.5,728.5 756.5,739.5"/>
<polyline points="768.5,586.5 773.5,588.5 783.5,589.5"/>
<polyline points="853.5,576.5 857.5,584.5 868.5,590.5 878.5,591.5 882.5,598.5 893.5,614.5 903.5,618.5 908.5,624.5"/>
<polyline points="786.5,654.5 792.5,658.5 796.5,667.5 803.5,664.5 808.5,658.5 812.5,667.5 817.5,668.5 818.5,661.5 826.5,656.5 833.5,661.5 840.5,654.5 846.5,654.5 850.5,662.5"/>
<polyline points="912.5,677.5 917.5,686.5 918.5,696.5 916.5,704.5 913.5,706.5"/>
<polyline points="976.5,654.5 979.5,666.5 986.5,675.5 990.5,686.5 989.5,694.5 984.5,700.5"/>
<polyline points="768.5,726.5 773.5,728.5 778.5,732.5 790.5,728.5 803.5,722.5 818.5,714.5 833.5,705.5 850.5,701.5 862.5,694.5 873.5,697.5 886.5,701.5 896.5,710.5 908.5,717.5 923.5,721.5 938.5,720.5 948.5,715.5 963.5,718.5 976.5,725.5 986.5,728.5 996.5,738.5"/>
<polyline points="863.5,741.5 864.5,731.5 868.5,724.5 878.5,721.5"/>
<polyline points="892.5,761.5 900.5,762.5 913.5,760.5 928.5,755.5 938.5,751.5 940.5,761.5 943.5,767.5"/>
<polyline points="827.5,768.5 828.5,762.5 830.5,757.5"/>
<polyline points="770.5,658.5 773.5,666.5 774.5,676.5"/>
<polyline points="914.5,576.5 914.5,578.5 908.5,579.5 905.5,580.5 906.5,585.5 910.5,588.5 915.5,589.5 917.5,594.5 919.5,601.5 921.5,607.5 920.5,614.5 918.5,617.5 921.5,619.5"/>
<polyline points="927.5,581.5 942.5,581.5 948.5,584.5 951.5,591.5 956.5,595.5 962.5,596.5 966.5,604.5 966.5,610.5 975.5,612.5 981.5,617.5 988.5,624.5 996.5,628.5 1001.5,634.5 1004.5,642.5 1008.5,648.5 1009.5,657.5 1007.5,664.5 1004.5,669.5 998.5,670.5 995.5,668.5 992.5,672.5"/>
<polyline points="977.5,576.5 980.5,579.5 991.5,578.5 996.5,577.5"/>
<polyline points="1017.5,576.5 1020.5,581.5 1019.5,588.5 1020.5,595.5 1022.5,600.5 1023.5,605.5 1020.5,612.5 1021.5,617.5 1023.5,617.5"/>
<polyline points="896.5,615.5 902.5,619.5 910.5,623.5 912.5,625.5"/>
<polyline points="945.5,630.5 947.5,638.5 951.5,644.5 952.5,647.5 951.5,652.5 946.5,656.5 938.5,658.5 935.5,653.5 932.5,652.5 925.5,652.5 920.5,646.5 915.5,648.5 917.5,654.5 918.5,658.5 916.5,668.5 914.5,672.5"/>
<polyline points="911.5,639.5 915.5,642.5 920.5,646.5"/>
<polyline points="1020.5,662.5 1022.5,668.5"/>
</g>
<g fill="none" stroke="#ff0000" stroke-width="1" shape-rendering="crispEdges">
<polyline points="903.5,1.5 900.5,6.5 904.5,11.5 910.5,14.5 912.5,25.5 910.5,34.5 904.5,39.5 896.5,36.5 892.5,36.5 886.5,35.5 883.5,37.5 877.5,42.5 872.5,49.5 867.5,58.5 864.5,62.5 864.5,68.5 862.5,74.5"/>
<polyline points="859.5,78.5 861.5,82.5 862.5,88.5 862.5,96.5"/>
<polyline points="863.5,96.5 863.5,118.5 865.5,123.5 867.5,128.5 867.5,137.5 867.5,142.5 866.5,144.5"/>
<polyline points="866.5,157.5 867.5,162.5 872.5,165.5 877.5,171.5 880.5,178.5 877.5,186.5 873.5,192.5"/>
<polyline points="872.5,192.5 869.5,195.5 868.5,200.5 870.5,207.5 873.5,214.5 874.5,222.5 873.5,231.5 871.5,239.5 868.5,243.5 863.5,246.5 858.5,250.5 857.5,256.5 854.5,262.5 853.5,266.5 855.5,271.5 855.5,277.5 853.5,284.5 852.5,288.5"/>
<polyline points="843.5,283.5 845.5,285.5 846.5,288.5"/>
<polyline points="834.5,293.5 840.5,290.5"/>
<polyline points="846.5,288.5 850.5,294.5 853.5,288.5"/>
<polyline points="400.5,468.5 397.5,472.5 392.5,474.5 388.5,475.5"/>
<polyline points="387.5,491.5 391.5,495.5 396.5,498.5 401.5,498.5 405.5,495.5 407.5,490.5 412.5,490.5 415.5,494.5 418.5,499.5 423.5,501.5 428.5,500.5"/>
<polyline points="739.5,525.5 740.5,529.5"/>
<polyline points="748.5,535.5 748.5,542.5 745.5,548.5 743.5,556.5 739.5,557.5 736.5,560.5 736.5,562.5 738.5,565.5 740.5,566.5"/>
<polyline points="918.5,534.5 916.5,544.5 913.5,549.5 918.5,554.5 922.5,559.5 923.5,563.5"/>
<polyline points="768.5,492.5 769.5,496.5 772.5,497.5"/>
<polyline points="768.5,499.5 772.5,500.5 773.5,497.5"/>
<polyline points="914.5,507.5 914.5,508.5"/>
<polyline points="918.5,536.5 915.5,543.5"/>
<polyline points="786.5,465.5 791.5,468.5 797.5,471.5 800.5,470.5"/>
<polyline points="636.5,618.5 638.5,625.5 642.5,631.5 648.5,628.5 651.5,630.5"/>
<polyline points="738.5,579.5 737.5,584.5 733.5,587.5 728.5,588.5 722.5,588.5 720.5,590.5 718.5,593.5 720.5,594.5"/>
<polyline points="676.5,610.5 678.5,608.5 681.5,604.5 686.5,604.5"/>
<polyline points="656.5,608.5 657.5,609.5 660.5,610.5"/>
<polyline points="696.5,606.5 699.5,609.5 701.5,612.5 705.5,610.5"/>
<polyline points="722.5,608.5 721.5,612.5 720.5,617.5"/>
<polyline points="640.5,628.5 642.5,630.5 648.5,631.5 651.5,628.5 652.5,631.5"/>
<polyline points="657.5,639.5 661.5,639.5 663.5,644.5 669.5,646.5 673.5,646.5 674.5,652.5 675.5,658.5 679.5,659.5 684.5,658.5 688.5,654.5 691.5,654.5 692.5,660.5"/>
<polyline points="719.5,630.5 722.5,633.5 725.5,638.5 726.5,642.5 728.5,645.5 724.5,648.5 722.5,652.5 718.5,654.5 715.5,656.5 713.5,661.5 712.5,666.5"/>
<polyline points="722.5,652.5 723.5,658.5 726.5,662.5 730.5,664.5"/>
<polyline points="695.5,666.5 699.5,670.5 702.5,675.5 705.5,677.5 709.5,675.5 712.5,674.5 716.5,671.5 714.5,666.5"/>
<polyline points="712.5,674.5 718.5,677.5 722.5,677.5 728.5,677.5 728.5,674.5"/>
<polyline points="742.5,687.5 746.5,690.5 751.5,688.5 756.5,692.5 761.5,694.5 767.5,694.5"/>
<polyline points="768.5,702.5 764.5,706.5 761.5,711.5 760.5,716.5 757.5,724.5 755.5,731.5 754.5,740.5"/>
<polyline points="764.5,745.5 768.5,745.5"/>
<polyline points="767.5,761.5 768.5,762.5"/>
<polyline points="890.5,642.5 880.5,644.5 872.5,646.5 864.5,649.5 863.5,647.5 866.5,652.5 870.5,658.5 873.5,664.5"/>
<polyline points="876.5,677.5 880.5,682.5 883.5,686.5"/>
<polyline points="894.5,694.5 898.5,697.5 903.5,701.5 903.5,708.5 898.5,712.5 896.5,710.5"/>
<polyline points="903.5,701.5 908.5,706.5 916.5,710.5 923.5,707.5 928.5,704.5 930.5,698.5 934.5,696.5 943.5,696.5 952.5,700.5 959.5,702.5 963.5,704.5 968.5,702.5 977.5,705.5 978.5,701.5 984.5,700.5 993.5,701.5 1000.5,696.5 1006.5,688.5 1010.5,682.5 1013.5,681.5"/>
<polyline points="1022.5,675.5 1024.5,676.5"/>
<polyline points="977.5,705.5 976.5,712.5 977.5,721.5 980.5,726.5 986.5,730.5 993.5,736.5 1000.5,740.5 1010.5,740.5 1020.5,738.5 1023.5,731.5 1022.5,726.5"/>
<polyline points="983.5,730.5 980.5,738.5 973.5,741.5 967.5,742.5 970.5,746.5 968.5,751.5 966.5,758.5 967.5,766.5"/>
<polyline points="896.5,710.5 893.5,717.5 886.5,721.5 880.5,725.5 882.5,731.5 884.5,738.5 883.5,742.5 887.5,744.5 884.5,748.5 878.5,743.5 873.5,742.5 868.5,741.5 867.5,744.5 858.5,745.5 850.5,747.5 844.5,750.5"/>
<polyline points="829.5,746.5 824.5,747.5 820.5,756.5 818.5,751.5 816.5,747.5 806.5,746.5"/>
<polyline points="777.5,741.5 778.5,737.5 783.5,738.5 787.5,741.5"/>
<polyline points="800.5,764.5 809.5,764.5 814.5,767.5 822.5,766.5"/>
<polyline points="850.5,765.5 860.5,763.5 866.5,762.5 864.5,766.5"/>
<polyline points="768.5,701.5 769.5,700.5"/>
<polyline points="925.5,576.5 926.5,581.5 924.5,586.5 924.5,592.5 926.5,600.5 929.5,602.5 932.5,604.5 932.5,608.5"/>
<polyline points="896.5,635.5 901.5,630.5"/>
<polyline points="912.5,625.5 915.5,622.5 916.5,618.5 919.5,619.5 922.5,623.5 923.5,626.5 927.5,626.5 930.5,623.5 932.5,622.5 932.5,624.5 930.5,625.5"/>
<polyline points="934.5,622.5 938.5,623.5 941.5,628.5 945.5,630.5 951.5,630.5 956.5,633.5 962.5,634.5 964.5,637.5 963.5,641.5 961.5,644.5 965.5,647.5 968.5,652.5 974.5,654.5"/>
<polyline points="977.5,644.5 979.5,642.5 984.5,644.5"/>
<polyline points="989.5,648.5 994.5,648.5 997.5,648.5 995.5,649.5 995.5,653.5 999.5,657.5 1005.5,658.5 1009.5,658.5 1014.5,661.5 1017.5,663.5 1018.5,667.5 1022.5,668.5 1023.5,672.5"/>
</g>
<g stroke="#666666" stroke-width="1" shape-rendering="crispEdges">
<path d="M97 242.5H108 M102.5 237V248"/>
<path d="M97 463.5H108 M102.5 458V469"/>
<path d="M97 658.5H108 M102.5 653V664"/>
<path d="M334 242.5H345 M339.5 237V248"/>
<path d="M334 463.5H345 M339.5 458V469"/>
<path d="M334 658.5H345 M339.5 653V664"/>
<path d="M571 242.5H582 M576.5 237V248"/>
<path d="M571 463.5H582 M576.5 458V469"/>
<path d="M571 658.5H582 M576.5 653V664"/>
<path d="M808 242.5H819 M813.5 237V248"/>
<path d="M808 463.5H819 M813.5 458V469"/>
<path d="M808 658.5H819 M813.5 653V664"/>
</g>
<text class="l" filter="url(#tl)" x="91" y="27">20W</text>
<text class="l" filter="url(#tl)" x="328" y="27">10W</text>
<text class="l" filter="url(#tl)" x="574.5" y="27">0</text>
<text class="l" filter="url(#tl)" x="805" y="27">10E</text>
<text class="l" filter="url(#tl)" x="7.5" y="246">60N</text>
<text class="l" filter="url(#tl)" x="7.5" y="467">55N</text>
<text class="l" filter="url(#tl)" x="7.5" y="662">50N</text>
<g>
<rect x="383" y="133" width="22" height="13" fill="#000"/>
<text class="n" filter="url(#th)" x="383.6 390.6 397.6" y="143.9" fill="#ff0000">165</text>
<path d="M384 143h2v1h-2zM388 144h2v-1h-1v-1h-1z" fill="#000"/>
<rect x="405" y="137" width="22" height="13" fill="#000"/>
<text class="n" filter="url(#th)" x="405.6 412.6 419.6" y="147.9" fill="#ff0000">109</text>
<path d="M406 147h2v1h-2zM410 148h2v-1h-1v-1h-1z" fill="#000"/>
<rect x="757" y="60" width="15" height="13" fill="#000"/>
<text class="n" filter="url(#th)" x="757.6 764.6" y="70.9" fill="#ffff00">50</text>
<rect x="724" y="94" width="15" height="13" fill="#000"/>
<text class="n" filter="url(#th)" x="724.6 731.6" y="104.9" fill="#ffff00">57</text>
<rect x="714" y="109" width="15" height="13" fill="#000"/>
<text class="n" filter="url(#th)" x="714.6 721.6" y="119.9" fill="#ffff00">57</text>
<rect x="694" y="121" width="15" height="13" fill="#000"/>
<text class="n" filter="url(#th)" x="694.6 701.6" y="131.9" fill="#ffff00">50</text>
<rect x="687" y="136" width="15" height="13" fill="#000"/>
<text class="n" filter="url(#th)" x="687.6 694.6" y="146.9" fill="#ffff00">57</text>
<rect x="724" y="143" width="15" height="13" fill="#000"/>
<text class="n" filter="url(#th)" x="724.6 731.6" y="153.9" fill="#ffff00">50</text>
<rect x="680" y="160" width="15" height="13" fill="#000"/>
<text class="n" filter="url(#th)" x="680.6 687.6" y="170.9" fill="#ff0080">72</text>
<rect x="758" y="160" width="15" height="13" fill="#000"/>
<text class="n" filter="url(#th)" x="758.6 765.6" y="170.9" fill="#ff0080">87</text>
<rect x="623" y="178" width="15" height="13" fill="#000"/>
<text class="n" filter="url(#th)" x="623.6 630.6" y="188.9" fill="#00ffff">39</text>
<rect x="726" y="180" width="15" height="13" fill="#000"/>
<text class="n" filter="url(#th)" x="726.6 733.6" y="190.9" fill="#ffff00">57</text>
<rect x="816" y="12" width="15" height="13" fill="#000"/>
<text class="n" filter="url(#th)" x="816.6 823.6" y="22.9" fill="#ff0080">69</text>
<rect x="792" y="25" width="15" height="13" fill="#000"/>
<text class="n" filter="url(#th)" x="792.6 799.6" y="35.9" fill="#ff0080">72</text>
<rect x="840" y="33" width="15" height="13" fill="#000"/>
<text class="n" filter="url(#th)" x="840.6 847.6" y="43.9" fill="#00ffff">31</text>
<path d="M848 43h2v1h-2zM852 44h2v-1h-1v-1h-1z" fill="#000"/>
<rect x="769" y="42" width="15" height="13" fill="#000"/>
<text class="n" filter="url(#th)" x="769.6 776.6" y="52.9" fill="#ffff00">57</text>
<rect x="796" y="50" width="15" height="13" fill="#000"/>
<text class="n" filter="url(#th)" x="796.6 803.6" y="60.9" fill="#ff0080">69</text>
<rect x="828" y="62" width="15" height="13" fill="#000"/>
<text class="n" filter="url(#th)" x="828.6 835.6" y="72.9" fill="#ff0080">72</text>
<rect x="847" y="65" width="15" height="13" fill="#000"/>
<text class="n" filter="url(#th)" x="847.6 854.6" y="75.9" fill="#ffff00">57</text>
<rect x="801" y="76" width="15" height="13" fill="#000"/>
<text class="n" filter="url(#th)" x="801.6 808.6" y="86.9" fill="#00ffff">35</text>
<rect x="839" y="109" width="15" height="13" fill="#000"/>
<text class="n" filter="url(#th)" x="839.6 846.6" y="119.9" fill="#ff0080">69</text>
<rect x="824" y="125" width="15" height="13" fill="#000"/>
<text class="n" filter="url(#th)" x="824.6 831.6" y="135.9" fill="#ffff00">43</text>
<rect x="789" y="132" width="15" height="13" fill="#000"/>
<text class="n" filter="url(#th)" x="789.6 796.6" y="142.9" fill="#ff0000">96</text>
<rect x="854" y="144" width="15" height="13" fill="#000"/>
<text class="n" filter="url(#th)" x="854.6 861.6" y="154.9" fill="#ffff00">46</text>
<rect x="805" y="164" width="15" height="13" fill="#000"/>
<text class="n" filter="url(#th)" x="805.6 812.6" y="174.9" fill="#ffff00">61</text>
<path d="M813 174h2v1h-2zM817 175h2v-1h-1v-1h-1z" fill="#000"/>
<rect x="817" y="183" width="15" height="13" fill="#000"/>
<text class="n" filter="url(#th)" x="817.6 824.6" y="193.9" fill="#ffff00">54</text>
<rect x="427" y="277" width="22" height="13" fill="#000"/>
<text class="n" filter="url(#th)" x="427.6 434.6 441.6" y="287.9" fill="#ff0000">130</text>
<path d="M428 287h2v1h-2zM432 288h2v-1h-1v-1h-1z" fill="#000"/>
<rect x="500" y="285" width="15" height="13" fill="#000"/>
<text class="n" filter="url(#th)" x="500.6 507.6" y="295.9" fill="#ff0080">87</text>
<rect x="496" y="308" width="15" height="13" fill="#000"/>
<text class="n" filter="url(#th)" x="496.6 503.6" y="318.9" fill="#ff0080">70</text>
<rect x="419" y="318" width="15" height="13" fill="#000"/>
<text class="n" filter="url(#th)" x="419.6 426.6" y="328.9" fill="#ff0080">76</text>
<rect x="490" y="341" width="15" height="13" fill="#000"/>
<text class="n" filter="url(#th)" x="490.6 497.6" y="351.9" fill="#ff0080">67</text>
<rect x="394" y="357" width="15" height="13" fill="#000"/>
<text class="n" filter="url(#th)" x="394.6 401.6" y="367.9" fill="#ff0080">78</text>
<rect x="431" y="361" width="15" height="13" fill="#000"/>
<text class="n" filter="url(#th)" x="431.6 438.6" y="371.9" fill="#ffff00">50</text>
<rect x="478" y="363" width="15" height="13" fill="#000"/>
<text class="n" filter="url(#th)" x="478.6 485.6" y="373.9" fill="#ffff00">54</text>
<rect x="539" y="214" width="15" height="13" fill="#000"/>
<text class="n" filter="url(#th)" x="539.6 546.6" y="224.9" fill="#ff0080">76</text>
<rect x="520" y="230" width="15" height="13" fill="#000"/>
<text class="n" filter="url(#th)" x="520.6 527.6" y="240.9" fill="#ff0000">93</text>
<rect x="541" y="230" width="15" height="13" fill="#000"/>
<text class="n" filter="url(#th)" x="541.6 548.6" y="240.9" fill="#ff0080">78</text>
<rect x="530" y="258" width="15" height="13" fill="#000"/>
<text class="n" filter="url(#th)" x="530.6 537.6" y="268.9" fill="#ff0080">83</text>
<rect x="640" y="212" width="15" height="13" fill="#000"/>
<text class="n" filter="url(#th)" x="640.6 647.6" y="222.9" fill="#ffff00">50</text>
<rect x="681" y="200" width="15" height="13" fill="#000"/>
<text class="n" filter="url(#th)" x="681.6 688.6" y="210.9" fill="#ff0000">94</text>
<rect x="721" y="206" width="15" height="13" fill="#000"/>
<text class="n" filter="url(#th)" x="721.6 728.6" y="216.9" fill="#00ffff">30</text>
<rect x="747" y="207" width="15" height="13" fill="#000"/>
<text class="n" filter="url(#th)" x="747.6 754.6" y="217.9" fill="#ff0080">80</text>
<rect x="695" y="218" width="15" height="13" fill="#000"/>
<text class="n" filter="url(#th)" x="695.6 702.6" y="228.9" fill="#ff0080">65</text>
<rect x="689" y="240" width="15" height="13" fill="#000"/>
<text class="n" filter="url(#th)" x="689.6 696.6" y="250.9" fill="#ff0080">65</text>
<rect x="763" y="244" width="15" height="13" fill="#000"/>
<text class="n" filter="url(#th)" x="763.6 770.6" y="254.9" fill="#ff0080">87</text>
<rect x="744" y="256" width="15" height="13" fill="#000"/>
<text class="n" filter="url(#th)" x="744.6 751.6" y="266.9" fill="#ffff00">61</text>
<path d="M752 266h2v1h-2zM756 267h2v-1h-1v-1h-1z" fill="#000"/>
<rect x="685" y="269" width="15" height="13" fill="#000"/>
<text class="n" filter="url(#th)" x="685.6 692.6" y="279.9" fill="#ff0080">87</text>
<rect x="703" y="289" width="15" height="13" fill="#000"/>
<text class="n" filter="url(#th)" x="703.6 710.6" y="299.9" fill="#ff0080">76</text>
<rect x="701" y="299" width="15" height="13" fill="#000"/>
<text class="n" filter="url(#th)" x="701.6 708.6" y="309.9" fill="#ff0080">83</text>
<rect x="723" y="305" width="15" height="13" fill="#000"/>
<text class="n" filter="url(#th)" x="723.6 730.6" y="315.9" fill="#ff0080">69</text>
<rect x="732" y="329" width="22" height="13" fill="#000"/>
<text class="n" filter="url(#th)" x="732.6 739.6 746.6" y="339.9" fill="#ff0000">111</text>
<path d="M733 339h2v1h-2zM737 340h2v-1h-1v-1h-1z" fill="#000"/>
<path d="M740 339h2v1h-2zM744 340h2v-1h-1v-1h-1z" fill="#000"/>
<path d="M747 339h2v1h-2zM751 340h2v-1h-1v-1h-1z" fill="#000"/>
<rect x="756" y="325" width="22" height="13" fill="#000"/>
<text class="n" filter="url(#th)" x="756.6 763.6 770.6" y="335.9" fill="#ff0000">107</text>
<path d="M757 335h2v1h-2zM761 336h2v-1h-1v-1h-1z" fill="#000"/>
<rect x="527" y="350" width="15" height="13" fill="#000"/>
<text class="n" filter="url(#th)" x="527.6 534.6" y="360.9" fill="#ffff00">50</text>
<rect x="516" y="363" width="15" height="13" fill="#000"/>
<text class="n" filter="url(#th)" x="516.6 523.6" y="373.9" fill="#ffff00">52</text>
<rect x="785" y="209" width="15" height="13" fill="#000"/>
<text class="n" filter="url(#th)" x="785.6 792.6" y="219.9" fill="#00ffff">30</text>
<rect x="831" y="226" width="15" height="13" fill="#000"/>
<text class="n" filter="url(#th)" x="831.6 838.6" y="236.9" fill="#ffff00">50</text>
<rect x="813" y="237" width="15" height="13" fill="#000"/>
<text class="n" filter="url(#th)" x="813.6 820.6" y="247.9" fill="#ff0000">91</text>
<path d="M821 247h2v1h-2zM825 248h2v-1h-1v-1h-1z" fill="#000"/>
<rect x="797" y="254" width="15" height="13" fill="#000"/>
<text class="n" filter="url(#th)" x="797.6 804.6" y="264.9" fill="#ffff00">57</text>
<rect x="787" y="265" width="15" height="13" fill="#000"/>
<text class="n" filter="url(#th)" x="787.6 794.6" y="275.9" fill="#ffff00">54</text>
<rect x="824" y="265" width="15" height="13" fill="#000"/>
<text class="n" filter="url(#th)" x="824.6 831.6" y="275.9" fill="#ff0080">87</text>
<rect x="821" y="276" width="22" height="13" fill="#000"/>
<text class="n" filter="url(#th)" x="821.6 828.6 835.6" y="286.9" fill="#ff0000">119</text>
<path d="M822 286h2v1h-2zM826 287h2v-1h-1v-1h-1z" fill="#000"/>
<path d="M829 286h2v1h-2zM833 287h2v-1h-1v-1h-1z" fill="#000"/>
<rect x="771" y="281" width="15" height="13" fill="#000"/>
<text class="n" filter="url(#th)" x="771.6 778.6" y="291.9" fill="#00ffff">39</text>
<rect x="791" y="289" width="22" height="13" fill="#000"/>
<text class="n" filter="url(#th)" x="791.6 798.6 805.6" y="299.9" fill="#ff0000">104</text>
<path d="M792 299h2v1h-2zM796 300h2v-1h-1v-1h-1z" fill="#000"/>
<rect x="782" y="299" width="22" height="13" fill="#000"/>
<text class="n" filter="url(#th)" x="782.6 789.6 796.6" y="309.9" fill="#ff0000">111</text>
<path d="M783 309h2v1h-2zM787 310h2v-1h-1v-1h-1z" fill="#000"/>
<path d="M790 309h2v1h-2zM794 310h2v-1h-1v-1h-1z" fill="#000"/>
<path d="M797 309h2v1h-2zM801 310h2v-1h-1v-1h-1z" fill="#000"/>
<rect x="773" y="310" width="22" height="13" fill="#000"/>
<text class="n" filter="url(#th)" x="773.6 780.6 787.6" y="320.9" fill="#ff0000">122</text>
<path d="M774 320h2v1h-2zM778 321h2v-1h-1v-1h-1z" fill="#000"/>
<rect x="817" y="340" width="22" height="13" fill="#000"/>
<text class="n" filter="url(#th)" x="817.6 824.6 831.6" y="350.9" fill="#ff0000">119</text>
<path d="M818 350h2v1h-2zM822 351h2v-1h-1v-1h-1z" fill="#000"/>
<path d="M825 350h2v1h-2zM829 351h2v-1h-1v-1h-1z" fill="#000"/>
<rect x="805" y="346" width="15" height="13" fill="#000"/>
<text class="n" filter="url(#th)" x="805.6 812.6" y="356.9" fill="#ff0080">80</text>
<rect x="773" y="367" width="15" height="13" fill="#000"/>
<text class="n" filter="url(#th)" x="773.6 780.6" y="377.9" fill="#ff0000">94</text>
<rect x="802" y="368" width="15" height="13" fill="#000"/>
<text class="n" filter="url(#th)" x="802.6 809.6" y="378.9" fill="#ff0000">94</text>
<rect x="501" y="399" width="15" height="13" fill="#000"/>
<text class="n" filter="url(#th)" x="501.6 508.6" y="409.9" fill="#ff0000">89</text>
<rect x="461" y="419" width="15" height="13" fill="#000"/>
<text class="n" filter="url(#th)" x="461.6 468.6" y="429.9" fill="#ff0080">85</text>
<rect x="490" y="418" width="15" height="13" fill="#000"/>
<text class="n" filter="url(#th)" x="490.6 497.6" y="428.9" fill="#ff0000">89</text>
<rect x="417" y="428" width="22" height="13" fill="#000"/>
<text class="n" filter="url(#th)" x="417.6 424.6 431.6" y="438.9" fill="#ff0000">124</text>
<path d="M418 438h2v1h-2zM422 439h2v-1h-1v-1h-1z" fill="#000"/>
<rect x="456" y="435" width="22" height="13" fill="#000"/>
<text class="n" filter="url(#th)" x="456.6 463.6 470.6" y="445.9" fill="#ff0000">104</text>
<path d="M457 445h2v1h-2zM461 446h2v-1h-1v-1h-1z" fill="#000"/>
<rect x="430" y="439" width="22" height="13" fill="#000"/>
<text class="n" filter="url(#th)" x="430.6 437.6 444.6" y="449.9" fill="#ff0000">133</text>
<path d="M431 449h2v1h-2zM435 450h2v-1h-1v-1h-1z" fill="#000"/>
<rect x="391" y="442" width="22" height="13" fill="#000"/>
<text class="n" filter="url(#th)" x="391.6 398.6 405.6" y="452.9" fill="#ff0000">133</text>
<path d="M392 452h2v1h-2zM396 453h2v-1h-1v-1h-1z" fill="#000"/>
<rect x="493" y="444" width="15" height="13" fill="#000"/>
<text class="n" filter="url(#th)" x="493.6 500.6" y="454.9" fill="#ff0080">74</text>
<rect x="399" y="454" width="22" height="13" fill="#000"/>
<text class="n" filter="url(#th)" x="399.6 406.6 413.6" y="464.9" fill="#ff0000">113</text>
<path d="M400 464h2v1h-2zM404 465h2v-1h-1v-1h-1z" fill="#000"/>
<path d="M407 464h2v1h-2zM411 465h2v-1h-1v-1h-1z" fill="#000"/>
<rect x="508" y="455" width="15" height="13" fill="#000"/>
<text class="n" filter="url(#th)" x="508.6 515.6" y="465.9" fill="#ff0080">87</text>
<rect x="407" y="468" width="15" height="13" fill="#000"/>
<text class="n" filter="url(#th)" x="407.6 414.6" y="478.9" fill="#ff0080">83</text>
<rect x="370" y="477" width="22" height="13" fill="#000"/>
<text class="n" filter="url(#th)" x="370.6 377.6 384.6" y="487.9" fill="#ff0000">104</text>
<path d="M371 487h2v1h-2zM375 488h2v-1h-1v-1h-1z" fill="#000"/>
<rect x="332" y="488" width="15" height="13" fill="#000"/>
<text class="n" filter="url(#th)" x="332.6 339.6" y="498.9" fill="#ff0000">94</text>
<rect x="459" y="494" width="15" height="13" fill="#000"/>
<text class="n" filter="url(#th)" x="459.6 466.6" y="504.9" fill="#ff0000">93</text>
<rect x="360" y="502" width="15" height="13" fill="#000"/>
<text class="n" filter="url(#th)" x="360.6 367.6" y="512.9" fill="#ff0080">69</text>
<rect x="421" y="520" width="15" height="13" fill="#000"/>
<text class="n" filter="url(#th)" x="421.6 428.6" y="530.9" fill="#ffff00">61</text>
<path d="M429 530h2v1h-2zM433 531h2v-1h-1v-1h-1z" fill="#000"/>
<rect x="492" y="518" width="22" height="13" fill="#000"/>
<text class="n" filter="url(#th)" x="492.6 499.6 506.6" y="528.9" fill="#ff0000">102</text>
<path d="M493 528h2v1h-2zM497 529h2v-1h-1v-1h-1z" fill="#000"/>
<rect x="461" y="528" width="15" height="13" fill="#000"/>
<text class="n" filter="url(#th)" x="461.6 468.6" y="538.9" fill="#ff0080">81</text>
<path d="M469 538h2v1h-2zM473 539h2v-1h-1v-1h-1z" fill="#000"/>
<rect x="358" y="549" width="15" height="13" fill="#000"/>
<text class="n" filter="url(#th)" x="358.6 365.6" y="559.9" fill="#ff0080">80</text>
<rect x="506" y="545" width="15" height="13" fill="#000"/>
<text class="n" filter="url(#th)" x="506.6 513.6" y="555.9" fill="#ff0080">65</text>
<rect x="461" y="571" width="15" height="13" fill="#000"/>
<text class="n" filter="url(#th)" x="461.6 468.6" y="581.9" fill="#ff0080">76</text>
<rect x="645" y="392" width="15" height="13" fill="#000"/>
<text class="n" filter="url(#th)" x="645.6 652.6" y="402.9" fill="#ff0080">83</text>
<rect x="531" y="439" width="15" height="13" fill="#000"/>
<text class="n" filter="url(#th)" x="531.6 538.6" y="449.9" fill="#ff0080">87</text>
<rect x="515" y="445" width="15" height="13" fill="#000"/>
<text class="n" filter="url(#th)" x="515.6 522.6" y="455.9" fill="#ff0080">87</text>
<rect x="525" y="456" width="15" height="13" fill="#000"/>
<text class="n" filter="url(#th)" x="525.6 532.6" y="466.9" fill="#ff0080">85</text>
<rect x="548" y="475" width="15" height="13" fill="#000"/>
<text class="n" filter="url(#th)" x="548.6 555.6" y="485.9" fill="#ff0080">81</text>
<path d="M556 485h2v1h-2zM560 486h2v-1h-1v-1h-1z" fill="#000"/>
<rect x="533" y="485" width="15" height="13" fill="#000"/>
<text class="n" filter="url(#th)" x="533.6 540.6" y="495.9" fill="#ff0080">78</text>
<rect x="525" y="505" width="15" height="13" fill="#000"/>
<text class="n" filter="url(#th)" x="525.6 532.6" y="515.9" fill="#ff0080">72</text>
<rect x="559" y="503" width="15" height="13" fill="#000"/>
<text class="n" filter="url(#th)" x="559.6 566.6" y="513.9" fill="#ffff00">57</text>
<rect x="571" y="518" width="15" height="13" fill="#000"/>
<text class="n" filter="url(#th)" x="571.6 578.6" y="528.9" fill="#ff0080">72</text>
<rect x="518" y="524" width="15" height="13" fill="#000"/>
<text class="n" filter="url(#th)" x="518.6 525.6" y="534.9" fill="#ffff00">56</text>
<rect x="539" y="537" width="15" height="13" fill="#000"/>
<text class="n" filter="url(#th)" x="539.6 546.6" y="547.9" fill="#ffff00">56</text>
<rect x="557" y="536" width="15" height="13" fill="#000"/>
<text class="n" filter="url(#th)" x="557.6 564.6" y="546.9" fill="#ff0080">70</text>
<rect x="575" y="534" width="15" height="13" fill="#000"/>
<text class="n" filter="url(#th)" x="575.6 582.6" y="544.9" fill="#ff0080">69</text>
<rect x="553" y="548" width="15" height="13" fill="#000"/>
<text class="n" filter="url(#th)" x="553.6 560.6" y="558.9" fill="#ff0080">69</text>
<rect x="582" y="551" width="15" height="13" fill="#000"/>
<text class="n" filter="url(#th)" x="582.6 589.6" y="561.9" fill="#ffff00">50</text>
<rect x="529" y="558" width="15" height="13" fill="#000"/>
<text class="n" filter="url(#th)" x="529.6 536.6" y="568.9" fill="#ffff00">46</text>
<rect x="514" y="572" width="15" height="13" fill="#000"/>
<text class="n" filter="url(#th)" x="514.6 521.6" y="582.9" fill="#ffff00">52</text>
<rect x="681" y="463" width="15" height="13" fill="#000"/>
<text class="n" filter="url(#th)" x="681.6 688.6" y="473.9" fill="#ff0080">83</text>
<rect x="715" y="491" width="22" height="13" fill="#000"/>
<text class="n" filter="url(#th)" x="715.6 722.6 729.6" y="501.9" fill="#ff0000">122</text>
<path d="M716 501h2v1h-2zM720 502h2v-1h-1v-1h-1z" fill="#000"/>
<rect x="645" y="529" width="15" height="13" fill="#000"/>
<text class="n" filter="url(#th)" x="645.6 652.6" y="539.9" fill="#ff0080">69</text>
<rect x="692" y="522" width="22" height="13" fill="#000"/>
<text class="n" filter="url(#th)" x="692.6 699.6 706.6" y="532.9" fill="#ff0000">107</text>
<path d="M693 532h2v1h-2zM697 533h2v-1h-1v-1h-1z" fill="#000"/>
<rect x="716" y="515" width="22" height="13" fill="#000"/>
<text class="n" filter="url(#th)" x="716.6 723.6 730.6" y="525.9" fill="#ff0000">107</text>
<path d="M717 525h2v1h-2zM721 526h2v-1h-1v-1h-1z" fill="#000"/>
<rect x="738" y="509" width="15" height="13" fill="#000"/>
<text class="n" filter="url(#th)" x="738.6 745.6" y="519.9" fill="#ff0000">94</text>
<rect x="740" y="522" width="15" height="13" fill="#000"/>
<text class="n" filter="url(#th)" x="740.6 747.6" y="532.9" fill="#ff0080">87</text>
<rect x="725" y="532" width="15" height="13" fill="#000"/>
<text class="n" filter="url(#th)" x="725.6 732.6" y="542.9" fill="#ff0080">83</text>
<rect x="677" y="537" width="22" height="13" fill="#000"/>
<text class="n" filter="url(#th)" x="677.6 684.6 691.6" y="547.9" fill="#ff0000">111</text>
<path d="M678 547h2v1h-2zM682 548h2v-1h-1v-1h-1z" fill="#000"/>
<path d="M685 547h2v1h-2zM689 548h2v-1h-1v-1h-1z" fill="#000"/>
<path d="M692 547h2v1h-2zM696 548h2v-1h-1v-1h-1z" fill="#000"/>
<rect x="700" y="559" width="15" height="13" fill="#000"/>
<text class="n" filter="url(#th)" x="700.6 707.6" y="569.9" fill="#ff0080">87</text>
<rect x="708" y="549" width="15" height="13" fill="#000"/>
<text class="n" filter="url(#th)" x="708.6 715.6" y="559.9" fill="#ff0080">87</text>
<rect x="672" y="558" width="22" height="13" fill="#000"/>
<text class="n" filter="url(#th)" x="672.6 679.6 686.6" y="568.9" fill="#ff0000">115</text>
<path d="M673 568h2v1h-2zM677 569h2v-1h-1v-1h-1z" fill="#000"/>
<path d="M680 568h2v1h-2zM684 569h2v-1h-1v-1h-1z" fill="#000"/>
<rect x="742" y="556" width="15" height="13" fill="#000"/>
<text class="n" filter="url(#th)" x="742.6 749.6" y="566.9" fill="#ff0080">76</text>
<rect x="732" y="566" width="15" height="13" fill="#000"/>
<text class="n" filter="url(#th)" x="732.6 739.6" y="576.9" fill="#ff0080">80</text>
<rect x="764" y="385" width="15" height="13" fill="#000"/>
<text class="n" filter="url(#th)" x="764.6 771.6" y="395.9" fill="#ff0000">96</text>
<rect x="757" y="399" width="22" height="13" fill="#000"/>
<text class="n" filter="url(#th)" x="757.6 764.6 771.6" y="409.9" fill="#ff0000">115</text>
<path d="M758 409h2v1h-2zM762 410h2v-1h-1v-1h-1z" fill="#000"/>
<path d="M765 409h2v1h-2zM769 410h2v-1h-1v-1h-1z" fill="#000"/>
<rect x="758" y="415" width="22" height="13" fill="#000"/>
<text class="n" filter="url(#th)" x="758.6 765.6 772.6" y="425.9" fill="#ff0000">113</text>
<path d="M759 425h2v1h-2zM763 426h2v-1h-1v-1h-1z" fill="#000"/>
<path d="M766 425h2v1h-2zM770 426h2v-1h-1v-1h-1z" fill="#000"/>
<rect x="756" y="434" width="22" height="13" fill="#000"/>
<text class="n" filter="url(#th)" x="756.6 763.6 770.6" y="444.9" fill="#ff0000">148</text>
<path d="M757 444h2v1h-2zM761 445h2v-1h-1v-1h-1z" fill="#000"/>
<rect x="764" y="456" width="22" height="13" fill="#000"/>
<text class="n" filter="url(#th)" x="764.6 771.6 778.6" y="466.9" fill="#ff0000">119</text>
<path d="M765 466h2v1h-2zM769 467h2v-1h-1v-1h-1z" fill="#000"/>
<path d="M772 466h2v1h-2zM776 467h2v-1h-1v-1h-1z" fill="#000"/>
<rect x="752" y="490" width="22" height="13" fill="#000"/>
<text class="n" filter="url(#th)" x="752.6 759.6 766.6" y="500.9" fill="#ff0000">115</text>
<path d="M753 500h2v1h-2zM757 501h2v-1h-1v-1h-1z" fill="#000"/>
<path d="M760 500h2v1h-2zM764 501h2v-1h-1v-1h-1z" fill="#000"/>
<rect x="758" y="503" width="22" height="13" fill="#000"/>
<text class="n" filter="url(#th)" x="758.6 765.6 772.6" y="513.9" fill="#ff0000">107</text>
<path d="M759 513h2v1h-2zM763 514h2v-1h-1v-1h-1z" fill="#000"/>
<rect x="760" y="567" width="15" height="13" fill="#000"/>
<text class="n" filter="url(#th)" x="760.6 767.6" y="577.9" fill="#ff0080">83</text>
<rect x="838" y="384" width="22" height="13" fill="#000"/>
<text class="n" filter="url(#th)" x="838.6 845.6 852.6" y="394.9" fill="#ff0000">109</text>
<path d="M839 394h2v1h-2zM843 395h2v-1h-1v-1h-1z" fill="#000"/>
<rect x="808" y="391" width="15" height="13" fill="#000"/>
<text class="n" filter="url(#th)" x="808.6 815.6" y="401.9" fill="#ff0080">87</text>
<rect x="785" y="402" width="15" height="13" fill="#000"/>
<text class="n" filter="url(#th)" x="785.6 792.6" y="412.9" fill="#ff0000">91</text>
<path d="M793 412h2v1h-2zM797 413h2v-1h-1v-1h-1z" fill="#000"/>
<rect x="821" y="401" width="15" height="13" fill="#000"/>
<text class="n" filter="url(#th)" x="821.6 828.6" y="411.9" fill="#ff0000">91</text>
<path d="M829 411h2v1h-2zM833 412h2v-1h-1v-1h-1z" fill="#000"/>
<rect x="846" y="406" width="15" height="13" fill="#000"/>
<text class="n" filter="url(#th)" x="846.6 853.6" y="416.9" fill="#ff0000">94</text>
<rect x="786" y="426" width="15" height="13" fill="#000"/>
<text class="n" filter="url(#th)" x="786.6 793.6" y="436.9" fill="#ff0080">74</text>
<rect x="822" y="425" width="22" height="13" fill="#000"/>
<text class="n" filter="url(#th)" x="822.6 829.6 836.6" y="435.9" fill="#ff0000">109</text>
<path d="M823 435h2v1h-2zM827 436h2v-1h-1v-1h-1z" fill="#000"/>
<rect x="844" y="426" width="15" height="13" fill="#000"/>
<text class="n" filter="url(#th)" x="844.6 851.6" y="436.9" fill="#ff0000">89</text>
<rect x="866" y="425" width="15" height="13" fill="#000"/>
<text class="n" filter="url(#th)" x="866.6 873.6" y="435.9" fill="#ff0080">76</text>
<rect x="866" y="436" width="22" height="13" fill="#000"/>
<text class="n" filter="url(#th)" x="866.6 873.6 880.6" y="446.9" fill="#ff0000">100</text>
<path d="M867 446h2v1h-2zM871 447h2v-1h-1v-1h-1z" fill="#000"/>
<rect x="788" y="448" width="15" height="13" fill="#000"/>
<text class="n" filter="url(#th)" x="788.6 795.6" y="458.9" fill="#ff0000">94</text>
<rect x="829" y="450" width="22" height="13" fill="#000"/>
<text class="n" filter="url(#th)" x="829.6 836.6 843.6" y="460.9" fill="#ff0000">102</text>
<path d="M830 460h2v1h-2zM834 461h2v-1h-1v-1h-1z" fill="#000"/>
<rect x="918" y="454" width="15" height="13" fill="#000"/>
<text class="n" filter="url(#th)" x="918.6 925.6" y="464.9" fill="#ff0080">83</text>
<rect x="919" y="444" width="15" height="13" fill="#000"/>
<text class="n" filter="url(#th)" x="919.6 926.6" y="454.9" fill="#ff0080">74</text>
<rect x="801" y="463" width="22" height="13" fill="#000"/>
<text class="n" filter="url(#th)" x="801.6 808.6 815.6" y="473.9" fill="#ff0000">107</text>
<path d="M802 473h2v1h-2zM806 474h2v-1h-1v-1h-1z" fill="#000"/>
<rect x="825" y="464" width="22" height="13" fill="#000"/>
<text class="n" filter="url(#th)" x="825.6 832.6 839.6" y="474.9" fill="#ff0000">100</text>
<path d="M826 474h2v1h-2zM830 475h2v-1h-1v-1h-1z" fill="#000"/>
<rect x="872" y="465" width="15" height="13" fill="#000"/>
<text class="n" filter="url(#th)" x="872.6 879.6" y="475.9" fill="#ff0000">96</text>
<rect x="794" y="479" width="15" height="13" fill="#000"/>
<text class="n" filter="url(#th)" x="794.6 801.6" y="489.9" fill="#ff0000">94</text>
<rect x="808" y="477" width="22" height="13" fill="#000"/>
<text class="n" filter="url(#th)" x="808.6 815.6 822.6" y="487.9" fill="#ff0000">104</text>
<path d="M809 487h2v1h-2zM813 488h2v-1h-1v-1h-1z" fill="#000"/>
<rect x="831" y="476" width="15" height="13" fill="#000"/>
<text class="n" filter="url(#th)" x="831.6 838.6" y="486.9" fill="#ff0080">83</text>
<rect x="852" y="475" width="15" height="13" fill="#000"/>
<text class="n" filter="url(#th)" x="852.6 859.6" y="485.9" fill="#ff0000">93</text>
<rect x="769" y="484" width="22" height="13" fill="#000"/>
<text class="n" filter="url(#th)" x="769.6 776.6 783.6" y="494.9" fill="#ff0000">100</text>
<path d="M770 494h2v1h-2zM774 495h2v-1h-1v-1h-1z" fill="#000"/>
<rect x="782" y="495" width="15" height="13" fill="#000"/>
<text class="n" filter="url(#th)" x="782.6 789.6" y="505.9" fill="#ff0000">94</text>
<rect x="827" y="494" width="15" height="13" fill="#000"/>
<text class="n" filter="url(#th)" x="827.6 834.6" y="504.9" fill="#ff0080">87</text>
<rect x="855" y="490" width="15" height="13" fill="#000"/>
<text class="n" filter="url(#th)" x="855.6 862.6" y="500.9" fill="#ff0080">80</text>
<rect x="860" y="501" width="15" height="13" fill="#000"/>
<text class="n" filter="url(#th)" x="860.6 867.6" y="511.9" fill="#ff0080">65</text>
<rect x="899" y="487" width="15" height="13" fill="#000"/>
<text class="n" filter="url(#th)" x="899.6 906.6" y="497.9" fill="#ff0080">69</text>
<rect x="822" y="505" width="15" height="13" fill="#000"/>
<text class="n" filter="url(#th)" x="822.6 829.6" y="515.9" fill="#ff0080">72</text>
<rect x="805" y="512" width="15" height="13" fill="#000"/>
<text class="n" filter="url(#th)" x="805.6 812.6" y="522.9" fill="#ff0080">80</text>
<rect x="839" y="512" width="15" height="13" fill="#000"/>
<text class="n" filter="url(#th)" x="839.6 846.6" y="522.9" fill="#ffff00">57</text>
<rect x="772" y="516" width="15" height="13" fill="#000"/>
<text class="n" filter="url(#th)" x="772.6 779.6" y="526.9" fill="#ff0080">80</text>
<rect x="902" y="508" width="15" height="13" fill="#000"/>
<text class="n" filter="url(#th)" x="902.6 909.6" y="518.9" fill="#ff0080">69</text>
<rect x="938" y="490" width="15" height="13" fill="#000"/>
<text class="n" filter="url(#th)" x="938.6 945.6" y="500.9" fill="#ffff00">50</text>
<rect x="934" y="507" width="15" height="13" fill="#000"/>
<text class="n" filter="url(#th)" x="934.6 941.6" y="517.9" fill="#ffff00">43</text>
<rect x="984" y="467" width="15" height="13" fill="#000"/>
<text class="n" filter="url(#th)" x="984.6 991.6" y="477.9" fill="#ffff00">50</text>
<rect x="1015" y="473" width="15" height="13" fill="#000"/>
<text class="n" filter="url(#th)" x="1015.6 1022.6" y="483.9" fill="#ffff00">50</text>
<rect x="869" y="517" width="15" height="13" fill="#000"/>
<text class="n" filter="url(#th)" x="869.6 876.6" y="527.9" fill="#ff0080">72</text>
<rect x="822" y="522" width="15" height="13" fill="#000"/>
<text class="n" filter="url(#th)" x="822.6 829.6" y="532.9" fill="#ffff00">61</text>
<path d="M830 532h2v1h-2zM834 533h2v-1h-1v-1h-1z" fill="#000"/>
<rect x="852" y="525" width="15" height="13" fill="#000"/>
<text class="n" filter="url(#th)" x="852.6 859.6" y="535.9" fill="#ffff00">57</text>
<rect x="899" y="525" width="15" height="13" fill="#000"/>
<text class="n" filter="url(#th)" x="899.6 906.6" y="535.9" fill="#ffff00">61</text>
<path d="M907 535h2v1h-2zM911 536h2v-1h-1v-1h-1z" fill="#000"/>
<rect x="915" y="522" width="15" height="13" fill="#000"/>
<text class="n" filter="url(#th)" x="915.6 922.6" y="532.9" fill="#ffff00">57</text>
<rect x="777" y="535" width="15" height="13" fill="#000"/>
<text class="n" filter="url(#th)" x="777.6 784.6" y="545.9" fill="#ff0080">69</text>
<rect x="804" y="545" width="15" height="13" fill="#000"/>
<text class="n" filter="url(#th)" x="804.6 811.6" y="555.9" fill="#ffff00">54</text>
<rect x="847" y="541" width="15" height="13" fill="#000"/>
<text class="n" filter="url(#th)" x="847.6 854.6" y="551.9" fill="#ffff00">54</text>
<rect x="863" y="540" width="15" height="13" fill="#000"/>
<text class="n" filter="url(#th)" x="863.6 870.6" y="550.9" fill="#ffff00">61</text>
<path d="M871 550h2v1h-2zM875 551h2v-1h-1v-1h-1z" fill="#000"/>
<rect x="900" y="536" width="15" height="13" fill="#000"/>
<text class="n" filter="url(#th)" x="900.6 907.6" y="546.9" fill="#ffff00">54</text>
<rect x="931" y="547" width="15" height="13" fill="#000"/>
<text class="n" filter="url(#th)" x="931.6 938.6" y="557.9" fill="#00ffff">39</text>
<rect x="767" y="554" width="15" height="13" fill="#000"/>
<text class="n" filter="url(#th)" x="767.6 774.6" y="564.9" fill="#ff0080">83</text>
<rect x="839" y="556" width="15" height="13" fill="#000"/>
<text class="n" filter="url(#th)" x="839.6 846.6" y="566.9" fill="#ffff00">54</text>
<rect x="857" y="561" width="15" height="13" fill="#000"/>
<text class="n" filter="url(#th)" x="857.6 864.6" y="571.9" fill="#ffff00">46</text>
<rect x="884" y="558" width="15" height="13" fill="#000"/>
<text class="n" filter="url(#th)" x="884.6 891.6" y="568.9" fill="#ffff00">61</text>
<path d="M892 568h2v1h-2zM896 569h2v-1h-1v-1h-1z" fill="#000"/>
<rect x="915" y="563" width="15" height="13" fill="#000"/>
<text class="n" filter="url(#th)" x="915.6 922.6" y="573.9" fill="#00ffff">39</text>
<rect x="784" y="565" width="15" height="13" fill="#000"/>
<text class="n" filter="url(#th)" x="784.6 791.6" y="575.9" fill="#ff0080">76</text>
<rect x="816" y="565" width="15" height="13" fill="#000"/>
<text class="n" filter="url(#th)" x="816.6 823.6" y="575.9" fill="#ffff00">61</text>
<path d="M824 575h2v1h-2zM828 576h2v-1h-1v-1h-1z" fill="#000"/>
<rect x="833" y="570" width="15" height="13" fill="#000"/>
<text class="n" filter="url(#th)" x="833.6 840.6" y="580.9" fill="#ffff00">61</text>
<path d="M841 580h2v1h-2zM845 581h2v-1h-1v-1h-1z" fill="#000"/>
<rect x="863" y="572" width="15" height="13" fill="#000"/>
<text class="n" filter="url(#th)" x="863.6 870.6" y="582.9" fill="#ffff00">61</text>
<path d="M871 582h2v1h-2zM875 583h2v-1h-1v-1h-1z" fill="#000"/>
<rect x="889" y="574" width="15" height="13" fill="#000"/>
<text class="n" filter="url(#th)" x="889.6 896.6" y="584.9" fill="#ffff00">61</text>
<path d="M897 584h2v1h-2zM901 585h2v-1h-1v-1h-1z" fill="#000"/>
<rect x="483" y="574" width="15" height="13" fill="#000"/>
<text class="n" filter="url(#th)" x="483.6 490.6" y="584.9" fill="#ffff00">48</text>
<rect x="449" y="588" width="15" height="13" fill="#000"/>
<text class="n" filter="url(#th)" x="449.6 456.6" y="598.9" fill="#ffff00">61</text>
<path d="M457 598h2v1h-2zM461 599h2v-1h-1v-1h-1z" fill="#000"/>
<rect x="465" y="587" width="15" height="13" fill="#000"/>
<text class="n" filter="url(#th)" x="465.6 472.6" y="597.9" fill="#ff0080">63</text>
<rect x="488" y="599" width="15" height="13" fill="#000"/>
<text class="n" filter="url(#th)" x="488.6 495.6" y="609.9" fill="#ff0080">69</text>
<rect x="508" y="595" width="15" height="13" fill="#000"/>
<text class="n" filter="url(#th)" x="508.6 515.6" y="605.9" fill="#ff0080">63</text>
<rect x="471" y="611" width="15" height="13" fill="#000"/>
<text class="n" filter="url(#th)" x="471.6 478.6" y="621.9" fill="#ff0080">65</text>
<rect x="506" y="614" width="15" height="13" fill="#000"/>
<text class="n" filter="url(#th)" x="506.6 513.6" y="624.9" fill="#ffff00">46</text>
<rect x="450" y="636" width="15" height="13" fill="#000"/>
<text class="n" filter="url(#th)" x="450.6 457.6" y="646.9" fill="#ffff00">59</text>
<rect x="471" y="639" width="15" height="13" fill="#000"/>
<text class="n" filter="url(#th)" x="471.6 478.6" y="649.9" fill="#ffff00">57</text>
<rect x="445" y="649" width="15" height="13" fill="#000"/>
<text class="n" filter="url(#th)" x="445.6 452.6" y="659.9" fill="#ffff00">57</text>
<rect x="506" y="673" width="15" height="13" fill="#000"/>
<text class="n" filter="url(#th)" x="506.6 513.6" y="683.9" fill="#ffff00">61</text>
<path d="M514 683h2v1h-2zM518 684h2v-1h-1v-1h-1z" fill="#000"/>
<rect x="466" y="699" width="15" height="13" fill="#000"/>
<text class="n" filter="url(#th)" x="466.6 473.6" y="709.9" fill="#ffff00">54</text>
<rect x="487" y="697" width="15" height="13" fill="#000"/>
<text class="n" filter="url(#th)" x="487.6 494.6" y="707.9" fill="#ffff00">61</text>
<path d="M495 707h2v1h-2zM499 708h2v-1h-1v-1h-1z" fill="#000"/>
<rect x="449" y="707" width="15" height="13" fill="#000"/>
<text class="n" filter="url(#th)" x="449.6 456.6" y="717.9" fill="#ffff00">61</text>
<path d="M457 717h2v1h-2zM461 718h2v-1h-1v-1h-1z" fill="#000"/>
<rect x="457" y="723" width="15" height="13" fill="#000"/>
<text class="n" filter="url(#th)" x="457.6 464.6" y="733.9" fill="#ff0080">72</text>
<rect x="486" y="736" width="15" height="13" fill="#000"/>
<text class="n" filter="url(#th)" x="486.6 493.6" y="746.9" fill="#ff0080">76</text>
<rect x="505" y="738" width="15" height="13" fill="#000"/>
<text class="n" filter="url(#th)" x="505.6 512.6" y="748.9" fill="#ff0080">65</text>
<rect x="494" y="748" width="15" height="13" fill="#000"/>
<text class="n" filter="url(#th)" x="494.6 501.6" y="758.9" fill="#ff0080">76</text>
<rect x="368" y="740" width="15" height="13" fill="#000"/>
<text class="n" filter="url(#th)" x="368.6 375.6" y="750.9" fill="#ff0080">63</text>
<rect x="531" y="586" width="15" height="13" fill="#000"/>
<text class="n" filter="url(#th)" x="531.6 538.6" y="596.9" fill="#ffff00">52</text>
<rect x="580" y="581" width="15" height="13" fill="#000"/>
<text class="n" filter="url(#th)" x="580.6 587.6" y="591.9" fill="#ffff00">48</text>
<rect x="558" y="596" width="15" height="13" fill="#000"/>
<text class="n" filter="url(#th)" x="558.6 565.6" y="606.9" fill="#ffff00">56</text>
<rect x="587" y="597" width="15" height="13" fill="#000"/>
<text class="n" filter="url(#th)" x="587.6 594.6" y="607.9" fill="#ff0080">65</text>
<rect x="527" y="608" width="15" height="13" fill="#000"/>
<text class="n" filter="url(#th)" x="527.6 534.6" y="618.9" fill="#ffff00">54</text>
<rect x="546" y="606" width="15" height="13" fill="#000"/>
<text class="n" filter="url(#th)" x="546.6 553.6" y="616.9" fill="#ffff00">50</text>
<rect x="601" y="609" width="15" height="13" fill="#000"/>
<text class="n" filter="url(#th)" x="601.6 608.6" y="619.9" fill="#ffff00">48</text>
<rect x="576" y="618" width="15" height="13" fill="#000"/>
<text class="n" filter="url(#th)" x="576.6 583.6" y="628.9" fill="#ffff00">48</text>
<rect x="511" y="632" width="15" height="13" fill="#000"/>
<text class="n" filter="url(#th)" x="511.6 518.6" y="642.9" fill="#ff0080">69</text>
<rect x="538" y="630" width="15" height="13" fill="#000"/>
<text class="n" filter="url(#th)" x="538.6 545.6" y="640.9" fill="#ff0080">72</text>
<rect x="607" y="624" width="15" height="13" fill="#000"/>
<text class="n" filter="url(#th)" x="607.6 614.6" y="634.9" fill="#ff0080">72</text>
<rect x="612" y="647" width="15" height="13" fill="#000"/>
<text class="n" filter="url(#th)" x="612.6 619.6" y="657.9" fill="#ffff00">57</text>
<rect x="595" y="654" width="15" height="13" fill="#000"/>
<text class="n" filter="url(#th)" x="595.6 602.6" y="664.9" fill="#ff0080">69</text>
<rect x="523" y="662" width="15" height="13" fill="#000"/>
<text class="n" filter="url(#th)" x="523.6 530.6" y="672.9" fill="#ff0080">69</text>
<rect x="539" y="663" width="15" height="13" fill="#000"/>
<text class="n" filter="url(#th)" x="539.6 546.6" y="673.9" fill="#ffff00">61</text>
<path d="M547 673h2v1h-2zM551 674h2v-1h-1v-1h-1z" fill="#000"/>
<rect x="567" y="670" width="22" height="13" fill="#000"/>
<text class="n" filter="url(#th)" x="567.6 574.6 581.6" y="680.9" fill="#ff0000">104</text>
<path d="M568 680h2v1h-2zM572 681h2v-1h-1v-1h-1z" fill="#000"/>
<rect x="597" y="674" width="15" height="13" fill="#000"/>
<text class="n" filter="url(#th)" x="597.6 604.6" y="684.9" fill="#ff0080">69</text>
<rect x="619" y="671" width="15" height="13" fill="#000"/>
<text class="n" filter="url(#th)" x="619.6 626.6" y="681.9" fill="#ff0080">69</text>
<rect x="558" y="681" width="15" height="13" fill="#000"/>
<text class="n" filter="url(#th)" x="558.6 565.6" y="691.9" fill="#ff0080">69</text>
<rect x="598" y="687" width="15" height="13" fill="#000"/>
<text class="n" filter="url(#th)" x="598.6 605.6" y="697.9" fill="#ff0080">65</text>
<rect x="629" y="687" width="15" height="13" fill="#000"/>
<text class="n" filter="url(#th)" x="629.6 636.6" y="697.9" fill="#ff0080">72</text>
<rect x="625" y="698" width="15" height="13" fill="#000"/>
<text class="n" filter="url(#th)" x="625.6 632.6" y="708.9" fill="#ff0080">69</text>
<rect x="520" y="703" width="15" height="13" fill="#000"/>
<text class="n" filter="url(#th)" x="520.6 527.6" y="713.9" fill="#ffff00">54</text>
<rect x="571" y="708" width="15" height="13" fill="#000"/>
<text class="n" filter="url(#th)" x="571.6 578.6" y="718.9" fill="#ffff00">54</text>
<rect x="604" y="707" width="15" height="13" fill="#000"/>
<text class="n" filter="url(#th)" x="604.6 611.6" y="717.9" fill="#ffff00">61</text>
<path d="M612 717h2v1h-2zM616 718h2v-1h-1v-1h-1z" fill="#000"/>
<rect x="528" y="721" width="15" height="13" fill="#000"/>
<text class="n" filter="url(#th)" x="528.6 535.6" y="731.9" fill="#ffff00">56</text>
<rect x="551" y="723" width="15" height="13" fill="#000"/>
<text class="n" filter="url(#th)" x="551.6 558.6" y="733.9" fill="#ffff00">54</text>
<rect x="574" y="726" width="15" height="13" fill="#000"/>
<text class="n" filter="url(#th)" x="574.6 581.6" y="736.9" fill="#ffff00">43</text>
<rect x="611" y="724" width="15" height="13" fill="#000"/>
<text class="n" filter="url(#th)" x="611.6 618.6" y="734.9" fill="#ffff00">61</text>
<path d="M619 734h2v1h-2zM623 735h2v-1h-1v-1h-1z" fill="#000"/>
<rect x="598" y="735" width="15" height="13" fill="#000"/>
<text class="n" filter="url(#th)" x="598.6 605.6" y="745.9" fill="#ffff00">61</text>
<path d="M606 745h2v1h-2zM610 746h2v-1h-1v-1h-1z" fill="#000"/>
<rect x="555" y="742" width="15" height="13" fill="#000"/>
<text class="n" filter="url(#th)" x="555.6 562.6" y="752.9" fill="#ffff00">57</text>
<rect x="609" y="748" width="15" height="13" fill="#000"/>
<text class="n" filter="url(#th)" x="609.6 616.6" y="758.9" fill="#ffff00">50</text>
<rect x="514" y="751" width="15" height="13" fill="#000"/>
<text class="n" filter="url(#th)" x="514.6 521.6" y="761.9" fill="#ff0080">80</text>
<rect x="531" y="754" width="15" height="13" fill="#000"/>
<text class="n" filter="url(#th)" x="531.6 538.6" y="764.9" fill="#ffff00">46</text>
<rect x="643" y="576" width="22" height="13" fill="#000"/>
<text class="n" filter="url(#th)" x="643.6 650.6 657.6" y="586.9" fill="#ff0000">104</text>
<path d="M644 586h2v1h-2zM648 587h2v-1h-1v-1h-1z" fill="#000"/>
<rect x="662" y="577" width="22" height="13" fill="#000"/>
<text class="n" filter="url(#th)" x="662.6 669.6 676.6" y="587.9" fill="#ff0000">104</text>
<path d="M663 587h2v1h-2zM667 588h2v-1h-1v-1h-1z" fill="#000"/>
<rect x="650" y="588" width="22" height="13" fill="#000"/>
<text class="n" filter="url(#th)" x="650.6 657.6 664.6" y="598.9" fill="#ff0000">100</text>
<path d="M651 598h2v1h-2zM655 599h2v-1h-1v-1h-1z" fill="#000"/>
<rect x="691" y="581" width="15" height="13" fill="#000"/>
<text class="n" filter="url(#th)" x="691.6 698.6" y="591.9" fill="#ff0080">87</text>
<rect x="708" y="574" width="15" height="13" fill="#000"/>
<text class="n" filter="url(#th)" x="708.6 715.6" y="584.9" fill="#ff0080">72</text>
<rect x="686" y="593" width="15" height="13" fill="#000"/>
<text class="n" filter="url(#th)" x="686.6 693.6" y="603.9" fill="#ff0080">76</text>
<rect x="716" y="595" width="15" height="13" fill="#000"/>
<text class="n" filter="url(#th)" x="716.6 723.6" y="605.9" fill="#ff0080">76</text>
<rect x="734" y="599" width="15" height="13" fill="#000"/>
<text class="n" filter="url(#th)" x="734.6 741.6" y="609.9" fill="#ff0080">65</text>
<rect x="756" y="592" width="15" height="13" fill="#000"/>
<text class="n" filter="url(#th)" x="756.6 763.6" y="602.9" fill="#ff0080">76</text>
<rect x="750" y="605" width="15" height="13" fill="#000"/>
<text class="n" filter="url(#th)" x="750.6 757.6" y="615.9" fill="#ffff00">54</text>
<rect x="637" y="607" width="15" height="13" fill="#000"/>
<text class="n" filter="url(#th)" x="637.6 644.6" y="617.9" fill="#ff0080">80</text>
<rect x="660" y="606" width="15" height="13" fill="#000"/>
<text class="n" filter="url(#th)" x="660.6 667.6" y="616.9" fill="#ff0000">91</text>
<path d="M668 616h2v1h-2zM672 617h2v-1h-1v-1h-1z" fill="#000"/>
<rect x="706" y="617" width="15" height="13" fill="#000"/>
<text class="n" filter="url(#th)" x="706.6 713.6" y="627.9" fill="#ff0080">83</text>
<rect x="705" y="607" width="15" height="13" fill="#000"/>
<text class="n" filter="url(#th)" x="705.6 712.6" y="617.9" fill="#ff0080">76</text>
<rect x="656" y="617" width="15" height="13" fill="#000"/>
<text class="n" filter="url(#th)" x="656.6 663.6" y="627.9" fill="#ff0080">76</text>
<rect x="689" y="614" width="15" height="13" fill="#000"/>
<text class="n" filter="url(#th)" x="689.6 696.6" y="624.9" fill="#ff0080">87</text>
<rect x="672" y="622" width="15" height="13" fill="#000"/>
<text class="n" filter="url(#th)" x="672.6 679.6" y="632.9" fill="#ff0080">87</text>
<rect x="739" y="624" width="15" height="13" fill="#000"/>
<text class="n" filter="url(#th)" x="739.6 746.6" y="634.9" fill="#ff0080">65</text>
<rect x="758" y="627" width="15" height="13" fill="#000"/>
<text class="n" filter="url(#th)" x="758.6 765.6" y="637.9" fill="#ffff00">50</text>
<rect x="698" y="627" width="15" height="13" fill="#000"/>
<text class="n" filter="url(#th)" x="698.6 705.6" y="637.9" fill="#ff0080">80</text>
<rect x="642" y="631" width="15" height="13" fill="#000"/>
<text class="n" filter="url(#th)" x="642.6 649.6" y="641.9" fill="#ff0080">80</text>
<rect x="674" y="634" width="15" height="13" fill="#000"/>
<text class="n" filter="url(#th)" x="674.6 681.6" y="644.9" fill="#ff0080">83</text>
<rect x="732" y="639" width="15" height="13" fill="#000"/>
<text class="n" filter="url(#th)" x="732.6 739.6" y="649.9" fill="#ff0080">65</text>
<rect x="643" y="644" width="15" height="13" fill="#000"/>
<text class="n" filter="url(#th)" x="643.6 650.6" y="654.9" fill="#ff0000">91</text>
<path d="M651 654h2v1h-2zM655 655h2v-1h-1v-1h-1z" fill="#000"/>
<rect x="697" y="650" width="15" height="13" fill="#000"/>
<text class="n" filter="url(#th)" x="697.6 704.6" y="660.9" fill="#ffff00">50</text>
<rect x="646" y="658" width="15" height="13" fill="#000"/>
<text class="n" filter="url(#th)" x="646.6 653.6" y="668.9" fill="#ff0080">76</text>
<rect x="679" y="660" width="15" height="13" fill="#000"/>
<text class="n" filter="url(#th)" x="679.6 686.6" y="670.9" fill="#ffff00">43</text>
<rect x="727" y="661" width="15" height="13" fill="#000"/>
<text class="n" filter="url(#th)" x="727.6 734.6" y="671.9" fill="#ff0080">72</text>
<rect x="743" y="663" width="15" height="13" fill="#000"/>
<text class="n" filter="url(#th)" x="743.6 750.6" y="673.9" fill="#ffff00">54</text>
<rect x="761" y="675" width="15" height="13" fill="#000"/>
<text class="n" filter="url(#th)" x="761.6 768.6" y="685.9" fill="#ff0080">76</text>
<rect x="664" y="677" width="15" height="13" fill="#000"/>
<text class="n" filter="url(#th)" x="664.6 671.6" y="687.9" fill="#ffff00">61</text>
<path d="M672 687h2v1h-2zM676 688h2v-1h-1v-1h-1z" fill="#000"/>
<rect x="727" y="678" width="15" height="13" fill="#000"/>
<text class="n" filter="url(#th)" x="727.6 734.6" y="688.9" fill="#ffff00">57</text>
<rect x="717" y="689" width="15" height="13" fill="#000"/>
<text class="n" filter="url(#th)" x="717.6 724.6" y="699.9" fill="#ffff00">50</text>
<rect x="685" y="701" width="15" height="13" fill="#000"/>
<text class="n" filter="url(#th)" x="685.6 692.6" y="711.9" fill="#ffff00">46</text>
<rect x="710" y="703" width="15" height="13" fill="#000"/>
<text class="n" filter="url(#th)" x="710.6 717.6" y="713.9" fill="#ffff00">52</text>
<rect x="664" y="712" width="15" height="13" fill="#000"/>
<text class="n" filter="url(#th)" x="664.6 671.6" y="722.9" fill="#ffff00">50</text>
<rect x="695" y="729" width="15" height="13" fill="#000"/>
<text class="n" filter="url(#th)" x="695.6 702.6" y="739.9" fill="#ffff00">50</text>
<rect x="653" y="731" width="15" height="13" fill="#000"/>
<text class="n" filter="url(#th)" x="653.6 660.6" y="741.9" fill="#ffff00">54</text>
<rect x="758" y="728" width="15" height="13" fill="#000"/>
<text class="n" filter="url(#th)" x="758.6 765.6" y="738.9" fill="#ff0000">94</text>
<rect x="749" y="740" width="15" height="13" fill="#000"/>
<text class="n" filter="url(#th)" x="749.6 756.6" y="750.9" fill="#00ff00">22</text>
<rect x="733" y="744" width="15" height="13" fill="#000"/>
<text class="n" filter="url(#th)" x="733.6 740.6" y="754.9" fill="#00ffff">39</text>
<rect x="736" y="755" width="15" height="13" fill="#000"/>
<text class="n" filter="url(#th)" x="736.6 743.6" y="765.9" fill="#ffff00">61</text>
<path d="M744 765h2v1h-2zM748 766h2v-1h-1v-1h-1z" fill="#000"/>
<rect x="788" y="581" width="15" height="13" fill="#000"/>
<text class="n" filter="url(#th)" x="788.6 795.6" y="591.9" fill="#ff0080">72</text>
<rect x="816" y="584" width="22" height="13" fill="#000"/>
<text class="n" filter="url(#th)" x="816.6 823.6 830.6" y="594.9" fill="#ff0000">126</text>
<path d="M817 594h2v1h-2zM821 595h2v-1h-1v-1h-1z" fill="#000"/>
<rect x="790" y="595" width="15" height="13" fill="#000"/>
<text class="n" filter="url(#th)" x="790.6 797.6" y="605.9" fill="#ff0080">65</text>
<rect x="813" y="599" width="15" height="13" fill="#000"/>
<text class="n" filter="url(#th)" x="813.6 820.6" y="609.9" fill="#ffff00">57</text>
<rect x="837" y="600" width="15" height="13" fill="#000"/>
<text class="n" filter="url(#th)" x="837.6 844.6" y="610.9" fill="#ffff00">54</text>
<rect x="859" y="599" width="15" height="13" fill="#000"/>
<text class="n" filter="url(#th)" x="859.6 866.6" y="609.9" fill="#ffff00">54</text>
<rect x="878" y="602" width="15" height="13" fill="#000"/>
<text class="n" filter="url(#th)" x="878.6 885.6" y="612.9" fill="#ffff00">50</text>
<rect x="770" y="607" width="15" height="13" fill="#000"/>
<text class="n" filter="url(#th)" x="770.6 777.6" y="617.9" fill="#ff0080">83</text>
<rect x="789" y="610" width="15" height="13" fill="#000"/>
<text class="n" filter="url(#th)" x="789.6 796.6" y="620.9" fill="#ff0080">72</text>
<rect x="829" y="615" width="15" height="13" fill="#000"/>
<text class="n" filter="url(#th)" x="829.6 836.6" y="625.9" fill="#ffff00">61</text>
<path d="M837 625h2v1h-2zM841 626h2v-1h-1v-1h-1z" fill="#000"/>
<rect x="923" y="608" width="15" height="13" fill="#000"/>
<text class="n" filter="url(#th)" x="923.6 930.6" y="618.9" fill="#ffff00">54</text>
<rect x="785" y="621" width="15" height="13" fill="#000"/>
<text class="n" filter="url(#th)" x="785.6 792.6" y="631.9" fill="#ffff00">57</text>
<rect x="856" y="619" width="15" height="13" fill="#000"/>
<text class="n" filter="url(#th)" x="856.6 863.6" y="629.9" fill="#ff0080">65</text>
<rect x="874" y="622" width="15" height="13" fill="#000"/>
<text class="n" filter="url(#th)" x="874.6 881.6" y="632.9" fill="#ffff00">57</text>
<rect x="824" y="627" width="15" height="13" fill="#000"/>
<text class="n" filter="url(#th)" x="824.6 831.6" y="637.9" fill="#ff0080">87</text>
<rect x="901" y="626" width="15" height="13" fill="#000"/>
<text class="n" filter="url(#th)" x="901.6 908.6" y="636.9" fill="#ffff00">50</text>
<rect x="805" y="633" width="15" height="13" fill="#000"/>
<text class="n" filter="url(#th)" x="805.6 812.6" y="643.9" fill="#ff0080">83</text>
<rect x="849" y="631" width="15" height="13" fill="#000"/>
<text class="n" filter="url(#th)" x="849.6 856.6" y="641.9" fill="#ffff00">57</text>
<rect x="876" y="637" width="15" height="13" fill="#000"/>
<text class="n" filter="url(#th)" x="876.6 883.6" y="647.9" fill="#ff0000">94</text>
<rect x="769" y="644" width="15" height="13" fill="#000"/>
<text class="n" filter="url(#th)" x="769.6 776.6" y="654.9" fill="#ffff00">50</text>
<rect x="808" y="645" width="15" height="13" fill="#000"/>
<text class="n" filter="url(#th)" x="808.6 815.6" y="655.9" fill="#ffff00">46</text>
<rect x="974" y="645" width="15" height="13" fill="#000"/>
<text class="n" filter="url(#th)" x="974.6 981.6" y="655.9" fill="#ff0080">80</text>
<rect x="869" y="664" width="15" height="13" fill="#000"/>
<text class="n" filter="url(#th)" x="869.6 876.6" y="674.9" fill="#ffff00">57</text>
<rect x="886" y="660" width="15" height="13" fill="#000"/>
<text class="n" filter="url(#th)" x="886.6 893.6" y="670.9" fill="#00ffff">39</text>
<rect x="1006" y="668" width="15" height="13" fill="#000"/>
<text class="n" filter="url(#th)" x="1006.6 1013.6" y="678.9" fill="#ffff00">57</text>
<rect x="880" y="684" width="15" height="13" fill="#000"/>
<text class="n" filter="url(#th)" x="880.6 887.6" y="694.9" fill="#ff0080">69</text>
<rect x="767" y="687" width="15" height="13" fill="#000"/>
<text class="n" filter="url(#th)" x="767.6 774.6" y="697.9" fill="#ffff00">50</text>
<rect x="768" y="708" width="15" height="13" fill="#000"/>
<text class="n" filter="url(#th)" x="768.6 775.6" y="718.9" fill="#ffff00">57</text>
<rect x="789" y="738" width="15" height="13" fill="#000"/>
<text class="n" filter="url(#th)" x="789.6 796.6" y="748.9" fill="#00ff00">26</text>
<rect x="768" y="742" width="15" height="13" fill="#000"/>
<text class="n" filter="url(#th)" x="768.6 775.6" y="752.9" fill="#00ffff">33</text>
<rect x="829" y="744" width="15" height="13" fill="#000"/>
<text class="n" filter="url(#th)" x="829.6 836.6" y="754.9" fill="#ff0080">83</text>
<rect x="790" y="750" width="15" height="13" fill="#000"/>
<text class="n" filter="url(#th)" x="790.6 797.6" y="760.9" fill="#ff0080">67</text>
<rect x="868" y="754" width="15" height="13" fill="#000"/>
<text class="n" filter="url(#th)" x="868.6 875.6" y="764.9" fill="#ff0080">87</text>
<rect x="765" y="759" width="15" height="13" fill="#000"/>
<text class="n" filter="url(#th)" x="765.6 772.6" y="769.9" fill="#ff0080">63</text>
</g>
<rect x="2" y="2" width="501" height="13" fill="#fff"/>
<text class="t" filter="url(#th)" x="3.4" y="13" textLength="24.9" lengthAdjust="spacingAndGlyphs">DON</text>
<text class="t" filter="url(#th)" x="33.6" y="12.9">31.01.08</text>
<text class="t" filter="url(#th)" x="87.6" y="12.9">18:00</text>
<text class="t" filter="url(#th)" x="123.6" y="13" textLength="24.7" lengthAdjust="spacingAndGlyphs">UTC</text>
<text class="t" filter="url(#th)" x="156.4" y="13" textLength="132.0" lengthAdjust="spacingAndGlyphs">Bodenwettermeldungen</text>
<text class="t" filter="url(#th)" x="292.4" y="13" textLength="3.7" lengthAdjust="spacingAndGlyphs">:</text>
<text class="t" filter="url(#th)" x="304.4" y="13" textLength="56.0" lengthAdjust="spacingAndGlyphs">Max.Böen</text>
<text class="t" filter="url(#th)" x="364.1" y="13" textLength="36.1" lengthAdjust="spacingAndGlyphs">(letzte</text>
<text class="t" filter="url(#th)" x="403.6" y="12.9">6</text>
<text class="t" filter="url(#th)" x="414.4" y="13" textLength="51.2" lengthAdjust="spacingAndGlyphs">Stunden)</text>
<text class="t" filter="url(#th)" x="470.6" y="13">/</text>
<text class="t" filter="url(#th)" x="479.6" y="13" textLength="23.1" lengthAdjust="spacingAndGlyphs">kmh</text>
</svg></body></html>
